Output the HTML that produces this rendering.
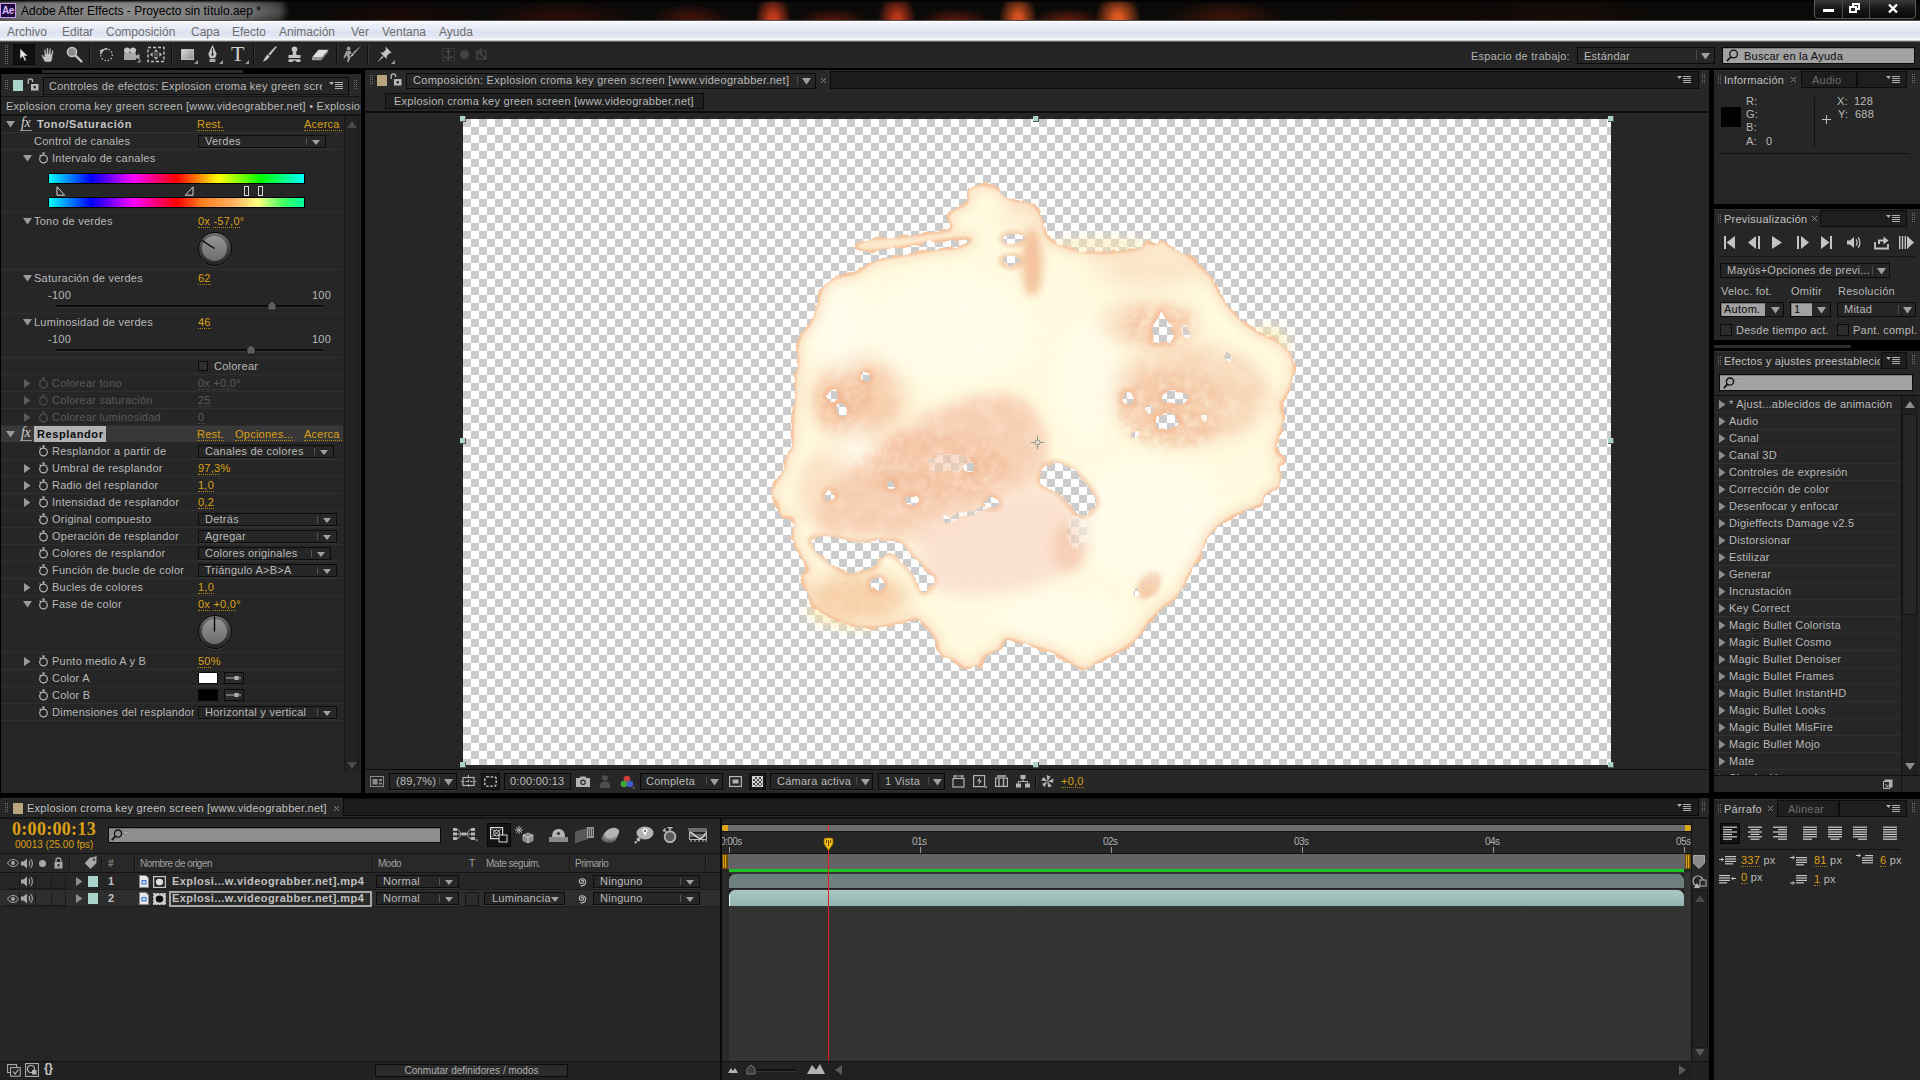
<!DOCTYPE html>
<html><head><meta charset="utf-8"><title>Adobe After Effects</title>
<style>
*{box-sizing:border-box;margin:0;padding:0}
html,body{width:1920px;height:1080px;overflow:hidden;background:#000}
body{font-family:"Liberation Sans",sans-serif;font-size:11px;color:#b9b9b9;letter-spacing:.25px;position:relative;line-height:13px}
.a{position:absolute}
.t{position:absolute;white-space:nowrap;height:13px;line-height:13px}
.o{color:#dca016}
.u{border-bottom:1px dotted #a87a10}
.dim{color:#5a5a5a}
.pn{position:absolute;background:#262626}
.dd{position:absolute;height:13px;background:#262626;border:1px solid #0c0c0c;box-shadow:0 1px 0 rgba(255,255,255,.06)}
.dd i{position:absolute;right:5px;top:4px;width:0;height:0;border-left:4px solid transparent;border-right:4px solid transparent;border-top:5px solid #a0a0a0}
.dd b{position:absolute;right:18px;top:2px;width:1px;height:7px;background:#555}
.dd span{position:absolute;left:6px;top:-1px;white-space:nowrap;line-height:13px;font-weight:normal}
.rs{position:absolute;left:0;height:1px;background:#303030}
svg{position:absolute;overflow:visible}
</style></head>
<body>
<div class="a" style="left:0;top:0;width:1920px;height:21px;background:#0b0a09;overflow:hidden">
<div class="a" style="left:754px;top:-7px;width:38px;height:44px;border-radius:50%;background:radial-gradient(ellipse at 50% 60%,#c43a1c 0%,#c43a1c 12%,transparent 68%);opacity:1"></div>
<div class="a" style="left:877px;top:-7px;width:40px;height:44px;border-radius:50%;background:radial-gradient(ellipse at 50% 60%,#b8341a 0%,#b8341a 12%,transparent 68%);opacity:1"></div>
<div class="a" style="left:998px;top:-8px;width:40px;height:44px;border-radius:50%;background:radial-gradient(ellipse at 50% 60%,#d0501f 0%,#d0501f 12%,transparent 68%);opacity:1"></div>
<div class="a" style="left:1094px;top:-8px;width:48px;height:44px;border-radius:50%;background:radial-gradient(ellipse at 50% 60%,#d8581f 0%,#d8581f 12%,transparent 68%);opacity:1"></div>
<div class="a" style="left:650px;top:4px;width:80px;height:24px;border-radius:50%;background:radial-gradient(ellipse at 50% 60%,#4a130a 0%,#4a130a 12%,transparent 68%);opacity:0.8"></div>
<div class="a" style="left:797px;top:8px;width:72px;height:20px;border-radius:50%;background:radial-gradient(ellipse at 50% 60%,#5a170c 0%,#5a170c 12%,transparent 68%);opacity:0.8"></div>
<div class="a" style="left:919px;top:8px;width:72px;height:20px;border-radius:50%;background:radial-gradient(ellipse at 50% 60%,#60190d 0%,#60190d 12%,transparent 68%);opacity:0.8"></div>
<div class="a" style="left:1031px;top:8px;width:72px;height:20px;border-radius:50%;background:radial-gradient(ellipse at 50% 60%,#6a1e0e 0%,#6a1e0e 12%,transparent 68%);opacity:0.8"></div>
<div class="a" style="left:480px;top:2px;width:160px;height:24px;border-radius:50%;background:radial-gradient(ellipse at 50% 60%,#2a0c07 0%,#2a0c07 12%,transparent 68%);opacity:0.9"></div>
<div class="a" style="left:1165px;top:0px;width:120px;height:28px;border-radius:50%;background:radial-gradient(ellipse at 50% 60%,#3a1408 0%,#3a1408 12%,transparent 68%);opacity:0.9"></div>
<div class="a" style="left:1450px;top:-4px;width:220px;height:32px;border-radius:50%;background:radial-gradient(ellipse at 50% 60%,#1c0b05 0%,#1c0b05 12%,transparent 68%);opacity:0.6"></div>
<div class="a" style="left:1310px;top:-4px;width:220px;height:28px;border-radius:50%;background:radial-gradient(ellipse at 50% 60%,#120804 0%,#120804 12%,transparent 68%);opacity:0.6"></div>
<div class="a" style="left:310px;top:2px;width:180px;height:24px;border-radius:50%;background:radial-gradient(ellipse at 50% 60%,#1c0805 0%,#1c0805 12%,transparent 68%);opacity:0.8"></div>
<div class="a" style="left:-30px;top:-7px;width:315px;height:36px;border-radius:19px;background:radial-gradient(ellipse at center,rgba(170,170,170,.85) 0%,rgba(150,150,150,.75) 55%,rgba(105,105,105,.35) 80%,rgba(0,0,0,0) 100%);filter:blur(3px)"></div>
<div class="a" style="left:0;top:0;width:1920px;height:3px;background:linear-gradient(#000,rgba(0,0,0,0))"></div>
<div class="a" style="left:0;top:3px;width:16px;height:15px;background:#1f0a3c;border:1px solid #c89cf0;color:#d9b8ff;font-size:10px;font-weight:bold;line-height:13px;letter-spacing:-.3px;text-align:center">Ae</div>
<div class="t" style="left:21px;top:4px;font-size:12px;letter-spacing:0;color:#000;height:15px;line-height:15px">Adobe After Effects - Proyecto sin título.aep *</div>
<div class="a" style="left:1814px;top:-1px;width:102px;height:20px;border:1px solid #5a5a5a;border-radius:0 0 4px 4px;background:linear-gradient(#3a3a3a,#151515 50%,#0a0a0a)"></div>
<div class="a" style="left:1842px;top:0;width:1px;height:18px;background:#4a4a4a"></div><div class="a" style="left:1869px;top:0;width:1px;height:18px;background:#4a4a4a"></div>
<div class="a" style="left:1823px;top:9px;width:11px;height:3px;background:#fff"></div>
<div class="a" style="left:1852px;top:3px;width:8px;height:7px;border:2px solid #fff;border-top-width:2px"></div><div class="a" style="left:1849px;top:6px;width:8px;height:7px;border:2px solid #fff;background:#222"></div>
<svg style="left:1888px;top:4px" width="10" height="9"><path d="M1 0.5L9 8.5M9 0.5L1 8.5" stroke="#fff" stroke-width="2.4"/></svg>
</div>
<div class="a" style="left:0;top:21px;width:1920px;height:21px;background:linear-gradient(#ffffff 0,#ffffff 1px,#f0f3fb 2px,#e6eaf6 8px,#dde2f0 11px,#e4e8f4 16px,#fbfcfe 19px,#8a8d95 20px,#3a3a3a 21px)"></div>
<div class="a" style="left:0;top:20px;width:1920px;height:1px;background:#55504c"></div>
<div class="t" style="left:7px;top:25px;font-size:12px;letter-spacing:0;color:#6d6d6d;height:15px;line-height:15px">Archivo</div>
<div class="t" style="left:62px;top:25px;font-size:12px;letter-spacing:0;color:#6d6d6d;height:15px;line-height:15px">Editar</div>
<div class="t" style="left:106px;top:25px;font-size:12px;letter-spacing:0;color:#6d6d6d;height:15px;line-height:15px">Composición</div>
<div class="t" style="left:191px;top:25px;font-size:12px;letter-spacing:0;color:#6d6d6d;height:15px;line-height:15px">Capa</div>
<div class="t" style="left:232px;top:25px;font-size:12px;letter-spacing:0;color:#6d6d6d;height:15px;line-height:15px">Efecto</div>
<div class="t" style="left:279px;top:25px;font-size:12px;letter-spacing:0;color:#6d6d6d;height:15px;line-height:15px">Animación</div>
<div class="t" style="left:351px;top:25px;font-size:12px;letter-spacing:0;color:#6d6d6d;height:15px;line-height:15px">Ver</div>
<div class="t" style="left:382px;top:25px;font-size:12px;letter-spacing:0;color:#6d6d6d;height:15px;line-height:15px">Ventana</div>
<div class="t" style="left:439px;top:25px;font-size:12px;letter-spacing:0;color:#6d6d6d;height:15px;line-height:15px">Ayuda</div>
<div class="a" style="left:0;top:42px;width:1920px;height:26px;background:#242424"></div>
<div class="a" style="left:5px;top:45px;width:1px;height:20px;background:repeating-linear-gradient(#707070 0 1px,transparent 1px 2px)"></div><div class="a" style="left:7px;top:45px;width:1px;height:20px;background:repeating-linear-gradient(#707070 0 1px,transparent 1px 2px)"></div>
<div class="a" style="left:13px;top:44px;width:22px;height:21px;background:#101010;border:1px solid #060606"></div>
<svg style="left:19px;top:48px" width="10" height="14"><path d="M1 0.5L1 11L3.6 8.6L5.6 13L7.4 12.2L5.4 8L9 8Z" fill="#e8e8e8" stroke="#222" stroke-width=".6"/></svg>
<svg style="left:41px;top:47px" width="15" height="16" viewBox="0 0 15 16"><path d="M4 15C2.5 12.5 1 10.5 0.5 8.5C0.6 7.6 1.6 7.6 2.2 8.4L3.4 10L3.2 3C3.3 2 4.6 2 4.8 3L5.3 7.2L5.6 1.4C5.8 .5 7 .5 7.2 1.4L7.5 7L8.4 1.9C8.7 1 9.9 1.2 9.9 2.2L9.7 7.4L11.2 3.6C11.6 2.8 12.7 3.2 12.5 4.2L11.4 9.5C11.3 12 10.8 13.6 10 15Z" fill="#c4c4c4" stroke="#333" stroke-width=".5"/></svg>
<svg style="left:66px;top:46px" width="17" height="17" viewBox="0 0 17 17"><circle cx="6" cy="6" r="4.6" fill="#8a8a8a" stroke="#c4c4c4" stroke-width="1.5"/><path d="M9.6 9.6L15.5 15.5" stroke="#c4c4c4" stroke-width="2.4" stroke-linecap="round"/></svg>
<div class="a" style="left:89px;top:45px;width:1px;height:20px;background:#0e0e0e;box-shadow:1px 0 0 #343434"></div>
<div class="a" style="left:171px;top:45px;width:1px;height:20px;background:#0e0e0e;box-shadow:1px 0 0 #343434"></div>
<div class="a" style="left:253px;top:45px;width:1px;height:20px;background:#0e0e0e;box-shadow:1px 0 0 #343434"></div>
<div class="a" style="left:336px;top:45px;width:1px;height:20px;background:#0e0e0e;box-shadow:1px 0 0 #343434"></div>
<div class="a" style="left:367px;top:45px;width:1px;height:20px;background:#0e0e0e;box-shadow:1px 0 0 #343434"></div>
<svg style="left:99px;top:47px" width="15" height="15" viewBox="0 0 15 15"><circle cx="7.5" cy="7.8" r="5.8" fill="none" stroke="#c4c4c4" stroke-width="1.3" stroke-dasharray="1.3 1.9"/><path d="M1.7 7.5A5.8 5.8 0 0 1 8.5 2" fill="none" stroke="#c4c4c4" stroke-width="1.3"/><path d="M.4 3.2L4.2 2.2L3.2 6Z" fill="#c4c4c4"/></svg>
<svg style="left:123px;top:47px" width="18" height="16" viewBox="0 0 18 16"><circle cx="4" cy="3.6" r="3" fill="#c4c4c4"/><circle cx="10" cy="3.6" r="3" fill="#c4c4c4"/><rect x="1" y="6" width="12" height="7" rx="1" fill="#a8a8a8"/><path d="M13 8.5L16.5 7V12.5L13 11Z" fill="#a8a8a8"/><path d="M14 15.5L17.5 15.5L17.5 12Z" fill="#999"/></svg>
<svg style="left:147px;top:46px" width="18" height="17" viewBox="0 0 18 17"><rect x="1" y="1.5" width="16" height="14" fill="none" stroke="#c4c4c4" stroke-width="1.4" stroke-dasharray="3 2"/><path d="M9 3.2L11.2 5.8H6.8ZM9 13.8L11.2 11.2H6.8ZM3 8.5L5.6 6.3V10.7ZM15 8.5L12.4 6.3V10.7Z" fill="#c4c4c4"/><rect x="6.6" y="6.3" width="4.8" height="4.4" fill="#555"/></svg>
<div class="a" style="left:181px;top:49px;width:13px;height:11px;background:linear-gradient(135deg,#d8d8d8,#909090);border:1px solid #bdbdbd"></div>
<svg style="left:194px;top:60px" width="4" height="4"><path d="M0 4H4V0Z" fill="#999"/></svg>
<svg style="left:206px;top:45px" width="13" height="18" viewBox="0 0 13 18"><path d="M6.5 0L10.5 8.5C10.5 10.5 9.6 12 8.8 13H4.2C3.4 12 2.5 10.5 2.5 8.5Z" fill="#c4c4c4"/><path d="M6.5 3V9" stroke="#333" stroke-width="1"/><circle cx="6.5" cy="9.6" r="1.2" fill="#333"/><rect x="3.6" y="13.8" width="5.8" height="3.2" fill="#aaa"/></svg>
<svg style="left:219px;top:60px" width="4" height="4"><path d="M0 4H4V0Z" fill="#999"/></svg>
<div class="t" style="left:231px;top:43px;font-family:'Liberation Serif',serif;font-size:22px;color:#cfcfcf;height:22px;line-height:22px;letter-spacing:0">T</div>
<svg style="left:245px;top:60px" width="4" height="4"><path d="M0 4H4V0Z" fill="#999"/></svg>
<svg style="left:262px;top:46px" width="16" height="17" viewBox="0 0 16 17"><path d="M15 .8L8 9.5L6.2 8L13.6 .2Z" fill="#c4c4c4"/><path d="M5.6 8.6L7.6 10.4C6.8 12.6 4 14.5 .8 15.8C2.4 13.4 3.2 10.4 5.6 8.6Z" fill="#c4c4c4"/></svg>
<svg style="left:287px;top:46px" width="15" height="17" viewBox="0 0 15 17"><circle cx="7.5" cy="3.4" r="2.8" fill="#c4c4c4"/><path d="M6.2 5.5H8.8L9.6 9H13.5V12H1.5V9H5.4Z" fill="#c4c4c4"/><path d="M1.5 13.2H13.5V16H10L7.5 14.2L5 16H1.5Z" fill="#c4c4c4"/></svg>
<svg style="left:311px;top:49px" width="18" height="12" viewBox="0 0 18 12"><path d="M7.5 .8H17.5L11 8.5H1Z" fill="#e0e0e0"/><path d="M1 8.5H11L10.5 11.2H.8Z" fill="#9a9a9a"/><path d="M11 8.5L17.5 .8L17 3.6L10.5 11.2Z" fill="#7c7c7c"/></svg>
<svg style="left:343px;top:45px" width="19" height="18" viewBox="0 0 19 18"><circle cx="5.6" cy="3.4" r="1.9" fill="#9c9c9c"/><path d="M3.2 6L7 5.6L8.8 8.6L6.6 9.4L7.4 13L5.6 17H3.8L5 13L3.4 10.4L1.6 13.4L.4 12.6Z" fill="#9c9c9c"/><path d="M18.2 .6L11.4 8.6L10.2 7.6Z" fill="#c4c4c4"/><path d="M9.8 8L11 9C10 11 8.8 11.6 7 12C8.2 10.6 8.4 9.2 9.8 8Z" fill="#c4c4c4"/></svg>
<svg style="left:376px;top:46px" width="17" height="17" viewBox="0 0 17 17"><path d="M9.5 .6L15.6 6.8L13.6 7.2L10.8 10L10.6 13L4.2 6.6L7.2 6.4L9.9 3.6Z" fill="#c4c4c4"/><path d="M6.4 9.8L7.6 11L1 16.4Z" fill="#c4c4c4"/></svg>
<svg style="left:391px;top:60px" width="4" height="4"><path d="M0 4H4V0Z" fill="#999"/></svg>
<svg style="left:442px;top:48px" width="13" height="13" viewBox="0 0 13 13"><rect x=".5" y=".5" width="12" height="12" fill="none" stroke="#383838"/><path d="M6.5 2V11M2 8L6.5 11L11 8M4.5 4L6.5 2L8.5 4" fill="none" stroke="#4a4a4a" stroke-width="1.2"/></svg>
<div class="a" style="left:460px;top:50px;width:9px;height:9px;border-radius:50%;background:#444"></div>
<svg style="left:475px;top:48px" width="13" height="13" viewBox="0 0 13 13"><path d="M2 3H11V11H2ZM2 3L11 11M6 .5V6" fill="none" stroke="#4a4a4a" stroke-width="1.2"/></svg>
<div class="t " style="left:1471px;top:50px;color:#b4b4b4">Espacio de trabajo:</div>
<div class="a" style="left:1577px;top:47px;width:138px;height:17px;background:#262626;border:1px solid #0a0a0a"></div>
<div class="t " style="left:1584px;top:50px;">Estándar</div>
<div class="a" style="left:1696px;top:50px;width:1px;height:10px;background:#4c4c4c"></div>
<svg style="left:1701px;top:53px" width="9" height="7"><path d="M0 0L9 0L4.5 6.5Z" fill="#a0a0a0"/></svg>
<div class="a" style="left:1722px;top:47px;width:193px;height:17px;background:#a2a2a2;border:1px solid #0a0a0a;box-shadow:inset 0 1px 0 #7f7f7f"></div>
<svg style="left:1726px;top:49px" width="13" height="13" viewBox="0 0 13 13"><circle cx="7.6" cy="5" r="3.8" fill="none" stroke="#111" stroke-width="1.3"/><path d="M5 7.8L1 12" stroke="#111" stroke-width="1.8"/></svg>
<div class="t " style="left:1744px;top:50px;color:#0c0c0c">Buscar en la Ayuda</div>
<div class="a" style="left:42px;top:70px;width:201px;height:3px;background:#2b2b2b;"></div>
<div class="a" style="left:1px;top:74px;width:360px;height:719px;background:#262626;overflow:hidden">
<div class="a" style="left:0px;top:0px;width:360px;height:22px;background:#282828;"></div>
<div class="a" style="left:4px;top:6px;width:1px;height:10px;background:repeating-linear-gradient(#707070 0 1px,transparent 1px 2px)"></div><div class="a" style="left:6px;top:6px;width:1px;height:10px;background:repeating-linear-gradient(#707070 0 1px,transparent 1px 2px)"></div>
<div class="a" style="left:12px;top:6px;width:10px;height:11px;background:#a9d4cc;"></div>
<svg style="left:26px;top:4px" width="12" height="13" viewBox="0 0 12 13"><path d="M1.2 6V3.2C1.2 1.6 2.2 .8 3.4 .8C4.6 .8 5.6 1.6 5.6 3.2V4" fill="none" stroke="#b8b8b8" stroke-width="1.3"/><rect x="4" y="6" width="7.5" height="6.5" fill="#b8b8b8"/><rect x="6.6" y="8" width="2.2" height="2.4" fill="#222"/></svg>
<div class="a" style="left:42px;top:3px;width:306px;height:18px;background:#262626;border:1px solid #0a0a0a;border-bottom-color:#111"></div>
<div class="a" style="left:48px;top:6px;width:273px;height:14px;overflow:hidden"><div class="t" style="left:0;top:0">Controles de efectos: Explosion croma key green screen</div></div>
<svg style="left:328px;top:7px" width="14" height="9"><path d="M0 1h5L2.5 4Z" fill="#b0b0b0"/><path d="M6 1.5h8M6 3.5h8M6 5.5h8M6 7.5h8" stroke="#b0b0b0" stroke-width="1"/></svg>
<div class="a" style="left:353px;top:6px;width:1px;height:10px;background:repeating-linear-gradient(#707070 0 1px,transparent 1px 2px)"></div><div class="a" style="left:355px;top:6px;width:1px;height:10px;background:repeating-linear-gradient(#707070 0 1px,transparent 1px 2px)"></div>
<div class="a" style="left:0;top:22px;width:360px;height:1px;background:#161616"></div>
<div class="t " style="left:5px;top:26px;">Explosion croma key green screen [www.videograbber.net] • Explosion croma</div>
<div class="a" style="left:0px;top:40px;width:360px;height:2px;background:#151515;"></div>
<div class="a" style="left:343px;top:42px;width:15px;height:655px;background:#222;border-left:1px solid #161616;border-right:1px solid #161616"></div>
<svg style="left:346px;top:47px" width="10" height="7"><path d="M0 7H10L5 0Z" fill="#4a4a4a"/></svg>
<svg style="left:346px;top:688px" width="10" height="7"><path d="M0 0H10L5 7Z" fill="#4a4a4a"/></svg>
<div class="a" style="left:0;top:42px;width:342px;height:660px;overflow:hidden">
<div class="a" style="left:0px;top:0px;width:342px;height:16px;background:#232323;"></div>
<svg style="left:5px;top:5px" width="9" height="7"><path d="M0 0L9 0L4.5 6.5Z" fill="#9a9a9a"/></svg>
<div class="t" style="left:20px;top:-1px;font-family:'Liberation Serif',serif;font-style:italic;font-size:14px;color:#d0d0d0;letter-spacing:-.5px;height:16px;line-height:16px">fx</div><div class="a" style="left:19px;top:14px;width:12px;height:1px;background:#999"></div>
<div class="t " style="left:36px;top:2px;font-weight:bold;color:#c6c6c6;letter-spacing:.6px">Tono/Saturación</div>
<div class="t o" style="left:196px;top:2px"><span style="border-bottom:1px dotted #b8860f;padding-bottom:0">Rest.</span></div>
<div class="t o" style="left:303px;top:2px"><span style="border-bottom:1px dotted #b8860f;padding-bottom:0">Acerca&nbsp;de...</span></div>
<div class="rs" style="top:16px;width:342px"></div>
<div class="t " style="left:33px;top:19px;">Control de canales</div>
<div class="dd" style="left:197px;top:19px;width:128px;"><span>Verdes</span><b></b><i></i></div>
<div class="rs" style="top:33px;width:342px"></div>
<svg style="left:22px;top:39px" width="9" height="7"><path d="M0 0L9 0L4.5 6.5Z" fill="#9a9a9a"/></svg>
<svg style="left:37px;top:36px" width="11" height="12" viewBox="0 0 11 12"><circle cx="5.5" cy="7" r="3.8" fill="none" stroke="#b4b4b4" stroke-width="1.25"/><path d="M4 1h3M5.5 1v2M1.6 2.6l1.3 1.3" stroke="#b4b4b4" stroke-width="1.1" fill="none"/></svg>
<div class="t " style="left:51px;top:36px;">Intervalo de canales</div>
<div class="a" style="left:47px;top:57px;width:257px;height:11px;border:1px solid #000;background:linear-gradient(90deg,#00ffff 0%,#0000ff 16.6%,#ff00ff 33.3%,#ff0000 50%,#ffff00 66.6%,#00ff00 83.3%,#00ffff 100%)"></div>
<div class="a" style="left:47px;top:81px;width:257px;height:11px;border:1px solid #000;background:linear-gradient(90deg,#00ffff 0%,#0000ff 16.6%,#ff00ff 33.3%,#ff0000 50%,#ff8020 60%,#ffb060 72%,#ffff80 82%,#40ff60 92%,#00ffa0 100%)"></div>
<svg style="left:55px;top:70px" width="10" height="10"><path d="M1 .8L1 9.2L8.6 9.2Z" fill="none" stroke="#d8d8d8" stroke-width="1"/></svg>
<svg style="left:183px;top:70px" width="10" height="10"><path d="M9 .8L9 9.2L1.4 9.2Z" fill="none" stroke="#d8d8d8" stroke-width="1"/></svg>
<div class="a" style="left:243px;top:70px;width:5px;height:10px;border:1px solid #d8d8d8"></div>
<div class="a" style="left:257px;top:70px;width:5px;height:10px;border:1px solid #d8d8d8"></div>
<div class="rs" style="top:96px;width:342px"></div>
<svg style="left:22px;top:102px" width="9" height="7"><path d="M0 0L9 0L4.5 6.5Z" fill="#9a9a9a"/></svg>
<div class="t " style="left:33px;top:99px;">Tono de verdes</div>
<div class="t o" style="left:197px;top:99px"><span style="border-bottom:1px dotted #b8860f;padding-bottom:0">0x</span> <span style="border-bottom:1px dotted #b8860f;padding-bottom:0">-57,0</span>°</div>
<div class="a" style="left:196.5px;top:115.5px;width:34px;height:34px;border-radius:50%;background:linear-gradient(#707070,#3c3c3c 55%,#242424);border:1px solid #0a0a0a;box-shadow:0 1px 0 rgba(255,255,255,.10)"></div><div class="a" style="left:201.0px;top:119.5px;width:25px;height:25px;border-radius:50%;background:linear-gradient(#959595,#6c6c6c)"></div><svg style="left:0;top:0" width="342" height="660"><path d="M213.5 132.5L200.9 124.3" stroke="#0a0a0a" stroke-width="1.4"/></svg>
<div class="rs" style="top:153px;width:342px"></div>
<svg style="left:22px;top:159px" width="9" height="7"><path d="M0 0L9 0L4.5 6.5Z" fill="#9a9a9a"/></svg>
<div class="t " style="left:33px;top:156px;">Saturación de verdes</div>
<div class="t o" style="left:197px;top:156px"><span style="border-bottom:1px dotted #b8860f;padding-bottom:0">62</span></div>
<div class="t " style="left:47px;top:173px;">-100</div>
<div class="t " style="left:311px;top:173px;">100</div>
<div class="a" style="left:55px;top:189px;width:267px;height:2px;background:#0c0c0c;box-shadow:0 1px 0 #333"></div>
<svg style="left:267px;top:185px" width="8" height="9"><path d="M0 9V3.5L4 0L8 3.5V9Z" fill="#5e5e5e" stroke="#161616" stroke-width=".8"/></svg>
<div class="rs" style="top:197px;width:342px"></div>
<svg style="left:22px;top:203px" width="9" height="7"><path d="M0 0L9 0L4.5 6.5Z" fill="#9a9a9a"/></svg>
<div class="t " style="left:33px;top:200px;">Luminosidad de verdes</div>
<div class="t o" style="left:197px;top:200px"><span style="border-bottom:1px dotted #b8860f;padding-bottom:0">46</span></div>
<div class="t " style="left:47px;top:217px;">-100</div>
<div class="t " style="left:311px;top:217px;">100</div>
<div class="a" style="left:55px;top:233px;width:267px;height:2px;background:#0c0c0c;box-shadow:0 1px 0 #333"></div>
<svg style="left:246px;top:229px" width="8" height="9"><path d="M0 9V3.5L4 0L8 3.5V9Z" fill="#5e5e5e" stroke="#161616" stroke-width=".8"/></svg>
<div class="rs" style="top:241px;width:342px"></div>
<div class="a" style="left:197px;top:245px;width:10px;height:10px;background:#2e2e2e;border:1px solid #0a0a0a"></div>
<div class="t " style="left:213px;top:244px;">Colorear</div>
<div class="rs" style="top:258px;width:342px"></div>
<svg style="left:23px;top:263px" width="7" height="9"><path d="M0 0L6.5 4.5L0 9Z" fill="#5a5a5a"/></svg>
<svg style="left:37px;top:261px" width="11" height="12" viewBox="0 0 11 12"><circle cx="5.5" cy="7" r="3.8" fill="none" stroke="#4e4e4e" stroke-width="1.25"/><path d="M4 1h3M5.5 1v2M1.6 2.6l1.3 1.3" stroke="#4e4e4e" stroke-width="1.1" fill="none"/></svg>
<div class="t dim" style="left:51px;top:261px;">Colorear tono</div>
<div class="t dim" style="left:197px;top:261px"><span style="border-bottom:1px dotted #4a4a4a;padding-bottom:0">0x</span> <span style="border-bottom:1px dotted #4a4a4a;padding-bottom:0">+0,0</span>°</div>
<div class="rs" style="top:275px;width:342px"></div>
<svg style="left:23px;top:280px" width="7" height="9"><path d="M0 0L6.5 4.5L0 9Z" fill="#5a5a5a"/></svg>
<svg style="left:37px;top:278px" width="11" height="12" viewBox="0 0 11 12"><circle cx="5.5" cy="7" r="3.8" fill="none" stroke="#4e4e4e" stroke-width="1.25"/><path d="M4 1h3M5.5 1v2M1.6 2.6l1.3 1.3" stroke="#4e4e4e" stroke-width="1.1" fill="none"/></svg>
<div class="t dim" style="left:51px;top:278px;">Colorear saturación</div>
<div class="t dim" style="left:197px;top:278px"><span style="border-bottom:1px dotted #4a4a4a;padding-bottom:0">25</span></div>
<div class="rs" style="top:292px;width:342px"></div>
<svg style="left:23px;top:297px" width="7" height="9"><path d="M0 0L6.5 4.5L0 9Z" fill="#5a5a5a"/></svg>
<svg style="left:37px;top:295px" width="11" height="12" viewBox="0 0 11 12"><circle cx="5.5" cy="7" r="3.8" fill="none" stroke="#4e4e4e" stroke-width="1.25"/><path d="M4 1h3M5.5 1v2M1.6 2.6l1.3 1.3" stroke="#4e4e4e" stroke-width="1.1" fill="none"/></svg>
<div class="t dim" style="left:51px;top:295px;">Colorear luminosidad</div>
<div class="t dim" style="left:197px;top:295px"><span style="border-bottom:1px dotted #4a4a4a;padding-bottom:0">0</span></div>
<div class="rs" style="top:309px;width:342px"></div>
<div class="a" style="left:0px;top:310px;width:342px;height:16px;background:#383838;"></div>
<svg style="left:5px;top:315px" width="9" height="7"><path d="M0 0L9 0L4.5 6.5Z" fill="#9a9a9a"/></svg>
<div class="t" style="left:20px;top:309px;font-family:'Liberation Serif',serif;font-style:italic;font-size:14px;color:#d0d0d0;letter-spacing:-.5px;height:16px;line-height:16px">fx</div><div class="a" style="left:19px;top:324px;width:12px;height:1px;background:#999"></div>
<div class="a" style="left:33px;top:310px;width:72px;height:16px;background:#b2b2b2;"></div>
<div class="t " style="left:36px;top:312px;font-weight:bold;color:#0a0a0a;letter-spacing:.6px">Resplandor</div>
<div class="t o" style="left:196px;top:312px"><span style="border-bottom:1px dotted #b8860f;padding-bottom:0">Rest.</span></div>
<div class="t o" style="left:234px;top:312px"><span style="border-bottom:1px dotted #b8860f;padding-bottom:0">Opciones...</span></div>
<div class="t o" style="left:303px;top:312px"><span style="border-bottom:1px dotted #b8860f;padding-bottom:0">Acerca&nbsp;de...</span></div>
<div class="a" style="left:25px;top:335px;width:1px;height:1px;background:#3c3c3c;"></div>
<svg style="left:37px;top:329px" width="11" height="12" viewBox="0 0 11 12"><circle cx="5.5" cy="7" r="3.8" fill="none" stroke="#b4b4b4" stroke-width="1.25"/><path d="M4 1h3M5.5 1v2M1.6 2.6l1.3 1.3" stroke="#b4b4b4" stroke-width="1.1" fill="none"/></svg>
<div class="a" style="left:51px;top:329px;width:142px;height:14px;overflow:hidden"><div class="t" style="left:0;top:0">Resplandor a partir de</div></div>
<div class="dd" style="left:197px;top:329px;width:136px;"><span>Canales de colores</span><b></b><i></i></div>
<div class="rs" style="top:343px;width:342px"></div>
<svg style="left:23px;top:348px" width="7" height="9"><path d="M0 0L6.5 4.5L0 9Z" fill="#9a9a9a"/></svg>
<svg style="left:37px;top:346px" width="11" height="12" viewBox="0 0 11 12"><circle cx="5.5" cy="7" r="3.8" fill="none" stroke="#b4b4b4" stroke-width="1.25"/><path d="M4 1h3M5.5 1v2M1.6 2.6l1.3 1.3" stroke="#b4b4b4" stroke-width="1.1" fill="none"/></svg>
<div class="a" style="left:51px;top:346px;width:142px;height:14px;overflow:hidden"><div class="t" style="left:0;top:0">Umbral de resplandor</div></div>
<div class="t o" style="left:197px;top:346px"><span style="border-bottom:1px dotted #b8860f;padding-bottom:0">97,3</span>%</div>
<div class="rs" style="top:360px;width:342px"></div>
<svg style="left:23px;top:365px" width="7" height="9"><path d="M0 0L6.5 4.5L0 9Z" fill="#9a9a9a"/></svg>
<svg style="left:37px;top:363px" width="11" height="12" viewBox="0 0 11 12"><circle cx="5.5" cy="7" r="3.8" fill="none" stroke="#b4b4b4" stroke-width="1.25"/><path d="M4 1h3M5.5 1v2M1.6 2.6l1.3 1.3" stroke="#b4b4b4" stroke-width="1.1" fill="none"/></svg>
<div class="a" style="left:51px;top:363px;width:142px;height:14px;overflow:hidden"><div class="t" style="left:0;top:0">Radio del resplandor</div></div>
<div class="t o" style="left:197px;top:363px"><span style="border-bottom:1px dotted #b8860f;padding-bottom:0">1,0</span></div>
<div class="rs" style="top:377px;width:342px"></div>
<svg style="left:23px;top:382px" width="7" height="9"><path d="M0 0L6.5 4.5L0 9Z" fill="#9a9a9a"/></svg>
<svg style="left:37px;top:380px" width="11" height="12" viewBox="0 0 11 12"><circle cx="5.5" cy="7" r="3.8" fill="none" stroke="#b4b4b4" stroke-width="1.25"/><path d="M4 1h3M5.5 1v2M1.6 2.6l1.3 1.3" stroke="#b4b4b4" stroke-width="1.1" fill="none"/></svg>
<div class="a" style="left:51px;top:380px;width:142px;height:14px;overflow:hidden"><div class="t" style="left:0;top:0">Intensidad de resplandor</div></div>
<div class="t o" style="left:197px;top:380px"><span style="border-bottom:1px dotted #b8860f;padding-bottom:0">0,2</span></div>
<div class="rs" style="top:394px;width:342px"></div>
<div class="a" style="left:25px;top:403px;width:1px;height:1px;background:#3c3c3c;"></div>
<svg style="left:37px;top:397px" width="11" height="12" viewBox="0 0 11 12"><circle cx="5.5" cy="7" r="3.8" fill="none" stroke="#b4b4b4" stroke-width="1.25"/><path d="M4 1h3M5.5 1v2M1.6 2.6l1.3 1.3" stroke="#b4b4b4" stroke-width="1.1" fill="none"/></svg>
<div class="a" style="left:51px;top:397px;width:142px;height:14px;overflow:hidden"><div class="t" style="left:0;top:0">Original compuesto</div></div>
<div class="dd" style="left:197px;top:397px;width:139px;"><span>Detrás</span><b></b><i></i></div>
<div class="rs" style="top:411px;width:342px"></div>
<div class="a" style="left:25px;top:420px;width:1px;height:1px;background:#3c3c3c;"></div>
<svg style="left:37px;top:414px" width="11" height="12" viewBox="0 0 11 12"><circle cx="5.5" cy="7" r="3.8" fill="none" stroke="#b4b4b4" stroke-width="1.25"/><path d="M4 1h3M5.5 1v2M1.6 2.6l1.3 1.3" stroke="#b4b4b4" stroke-width="1.1" fill="none"/></svg>
<div class="a" style="left:51px;top:414px;width:142px;height:14px;overflow:hidden"><div class="t" style="left:0;top:0">Operación de resplandor</div></div>
<div class="dd" style="left:197px;top:414px;width:139px;"><span>Agregar</span><b></b><i></i></div>
<div class="rs" style="top:428px;width:342px"></div>
<div class="a" style="left:25px;top:437px;width:1px;height:1px;background:#3c3c3c;"></div>
<svg style="left:37px;top:431px" width="11" height="12" viewBox="0 0 11 12"><circle cx="5.5" cy="7" r="3.8" fill="none" stroke="#b4b4b4" stroke-width="1.25"/><path d="M4 1h3M5.5 1v2M1.6 2.6l1.3 1.3" stroke="#b4b4b4" stroke-width="1.1" fill="none"/></svg>
<div class="a" style="left:51px;top:431px;width:142px;height:14px;overflow:hidden"><div class="t" style="left:0;top:0">Colores de resplandor</div></div>
<div class="dd" style="left:197px;top:431px;width:133px;"><span>Colores originales</span><b></b><i></i></div>
<div class="rs" style="top:445px;width:342px"></div>
<div class="a" style="left:25px;top:454px;width:1px;height:1px;background:#3c3c3c;"></div>
<svg style="left:37px;top:448px" width="11" height="12" viewBox="0 0 11 12"><circle cx="5.5" cy="7" r="3.8" fill="none" stroke="#b4b4b4" stroke-width="1.25"/><path d="M4 1h3M5.5 1v2M1.6 2.6l1.3 1.3" stroke="#b4b4b4" stroke-width="1.1" fill="none"/></svg>
<div class="a" style="left:51px;top:448px;width:142px;height:14px;overflow:hidden"><div class="t" style="left:0;top:0">Función de bucle de color</div></div>
<div class="dd" style="left:197px;top:448px;width:139px;"><span>Triángulo A&gt;B&gt;A</span><b></b><i></i></div>
<div class="rs" style="top:462px;width:342px"></div>
<svg style="left:23px;top:467px" width="7" height="9"><path d="M0 0L6.5 4.5L0 9Z" fill="#9a9a9a"/></svg>
<svg style="left:37px;top:465px" width="11" height="12" viewBox="0 0 11 12"><circle cx="5.5" cy="7" r="3.8" fill="none" stroke="#b4b4b4" stroke-width="1.25"/><path d="M4 1h3M5.5 1v2M1.6 2.6l1.3 1.3" stroke="#b4b4b4" stroke-width="1.1" fill="none"/></svg>
<div class="a" style="left:51px;top:465px;width:142px;height:14px;overflow:hidden"><div class="t" style="left:0;top:0">Bucles de colores</div></div>
<div class="t o" style="left:197px;top:465px"><span style="border-bottom:1px dotted #b8860f;padding-bottom:0">1,0</span></div>
<div class="rs" style="top:479px;width:342px"></div>
<svg style="left:22px;top:485px" width="9" height="7"><path d="M0 0L9 0L4.5 6.5Z" fill="#9a9a9a"/></svg>
<svg style="left:37px;top:482px" width="11" height="12" viewBox="0 0 11 12"><circle cx="5.5" cy="7" r="3.8" fill="none" stroke="#b4b4b4" stroke-width="1.25"/><path d="M4 1h3M5.5 1v2M1.6 2.6l1.3 1.3" stroke="#b4b4b4" stroke-width="1.1" fill="none"/></svg>
<div class="a" style="left:51px;top:482px;width:142px;height:14px;overflow:hidden"><div class="t" style="left:0;top:0">Fase de color</div></div>
<div class="t o" style="left:197px;top:482px"><span style="border-bottom:1px dotted #b8860f;padding-bottom:0">0x</span> <span style="border-bottom:1px dotted #b8860f;padding-bottom:0">+0,0</span>°</div>
<svg style="left:23px;top:541px" width="7" height="9"><path d="M0 0L6.5 4.5L0 9Z" fill="#9a9a9a"/></svg>
<svg style="left:37px;top:539px" width="11" height="12" viewBox="0 0 11 12"><circle cx="5.5" cy="7" r="3.8" fill="none" stroke="#b4b4b4" stroke-width="1.25"/><path d="M4 1h3M5.5 1v2M1.6 2.6l1.3 1.3" stroke="#b4b4b4" stroke-width="1.1" fill="none"/></svg>
<div class="a" style="left:51px;top:539px;width:142px;height:14px;overflow:hidden"><div class="t" style="left:0;top:0">Punto medio A y B</div></div>
<div class="t o" style="left:197px;top:539px"><span style="border-bottom:1px dotted #b8860f;padding-bottom:0">50</span>%</div>
<div class="rs" style="top:553px;width:342px"></div>
<div class="a" style="left:25px;top:562px;width:1px;height:1px;background:#3c3c3c;"></div>
<svg style="left:37px;top:556px" width="11" height="12" viewBox="0 0 11 12"><circle cx="5.5" cy="7" r="3.8" fill="none" stroke="#b4b4b4" stroke-width="1.25"/><path d="M4 1h3M5.5 1v2M1.6 2.6l1.3 1.3" stroke="#b4b4b4" stroke-width="1.1" fill="none"/></svg>
<div class="a" style="left:51px;top:556px;width:142px;height:14px;overflow:hidden"><div class="t" style="left:0;top:0">Color A</div></div>
<div class="a" style="left:197px;top:556px;width:20px;height:12px;background:#fff;border:1px solid #0a0a0a"></div>
<div class="a" style="left:223px;top:556px;width:20px;height:12px;background:#2a2a2a;border:1px solid #0a0a0a"></div>
<svg style="left:225px;top:559px" width="16" height="6"><path d="M0 3H15M9 1.5H12V4.5H9Z" stroke="#b0b0b0" stroke-width="1.2" fill="#b0b0b0"/></svg>
<div class="rs" style="top:570px;width:342px"></div>
<div class="a" style="left:25px;top:579px;width:1px;height:1px;background:#3c3c3c;"></div>
<svg style="left:37px;top:573px" width="11" height="12" viewBox="0 0 11 12"><circle cx="5.5" cy="7" r="3.8" fill="none" stroke="#b4b4b4" stroke-width="1.25"/><path d="M4 1h3M5.5 1v2M1.6 2.6l1.3 1.3" stroke="#b4b4b4" stroke-width="1.1" fill="none"/></svg>
<div class="a" style="left:51px;top:573px;width:142px;height:14px;overflow:hidden"><div class="t" style="left:0;top:0">Color B</div></div>
<div class="a" style="left:197px;top:573px;width:20px;height:12px;background:#000;border:1px solid #0a0a0a"></div>
<div class="a" style="left:223px;top:573px;width:20px;height:12px;background:#2a2a2a;border:1px solid #0a0a0a"></div>
<svg style="left:225px;top:576px" width="16" height="6"><path d="M0 3H15M9 1.5H12V4.5H9Z" stroke="#b0b0b0" stroke-width="1.2" fill="#b0b0b0"/></svg>
<div class="rs" style="top:587px;width:342px"></div>
<div class="a" style="left:25px;top:596px;width:1px;height:1px;background:#3c3c3c;"></div>
<svg style="left:37px;top:590px" width="11" height="12" viewBox="0 0 11 12"><circle cx="5.5" cy="7" r="3.8" fill="none" stroke="#b4b4b4" stroke-width="1.25"/><path d="M4 1h3M5.5 1v2M1.6 2.6l1.3 1.3" stroke="#b4b4b4" stroke-width="1.1" fill="none"/></svg>
<div class="a" style="left:51px;top:590px;width:142px;height:14px;overflow:hidden"><div class="t" style="left:0;top:0">Dimensiones del resplandor</div></div>
<div class="dd" style="left:197px;top:590px;width:139px;"><span>Horizontal y vertical</span><b></b><i></i></div>
<div class="rs" style="top:604px;width:342px"></div>
<div class="a" style="left:196.5px;top:498.5px;width:34px;height:34px;border-radius:50%;background:linear-gradient(#707070,#3c3c3c 55%,#242424);border:1px solid #0a0a0a;box-shadow:0 1px 0 rgba(255,255,255,.10)"></div><div class="a" style="left:201.0px;top:502.5px;width:25px;height:25px;border-radius:50%;background:linear-gradient(#959595,#6c6c6c)"></div><svg style="left:0;top:0" width="342" height="660"><path d="M213.5 515.5L213.5 500.5" stroke="#0a0a0a" stroke-width="1.4"/></svg>
<div class="rs" style="top:536px;width:342px"></div>
</div>
</div>
<div class="a" style="left:365px;top:70px;width:1344px;height:723px;background:#262626;overflow:hidden">
<div class="a" style="left:0px;top:0px;width:1343px;height:22px;background:#282828;"></div>
<div class="a" style="left:5px;top:5px;width:1px;height:10px;background:repeating-linear-gradient(#707070 0 1px,transparent 1px 2px)"></div><div class="a" style="left:7px;top:5px;width:1px;height:10px;background:repeating-linear-gradient(#707070 0 1px,transparent 1px 2px)"></div>
<div class="a" style="left:12px;top:5px;width:10px;height:11px;background:#b8a47e;"></div>
<svg style="left:25px;top:3px" width="12" height="13" viewBox="0 0 12 13"><path d="M1.2 6V3.2C1.2 1.6 2.2 .8 3.4 .8C4.6 .8 5.6 1.6 5.6 3.2V4" fill="none" stroke="#b8b8b8" stroke-width="1.3"/><rect x="4" y="6" width="7.5" height="6.5" fill="#b8b8b8"/><rect x="6.6" y="8" width="2.2" height="2.4" fill="#222"/></svg>
<div class="a" style="left:465px;top:1px;width:869px;height:18px;background:#1c1c1c;border:1px solid #0a0a0a"></div>
<div class="a" style="left:41px;top:3px;width:410px;height:16px;background:#262626;border:1px solid #0a0a0a"></div>
<div class="t " style="left:48px;top:4px;letter-spacing:.3px">Composición: Explosion croma key green screen [www.videograbber.net]</div>
<div class="a" style="left:432px;top:6px;width:1px;height:9px;background:#4c4c4c;"></div>
<svg style="left:437px;top:8px" width="9" height="7"><path d="M0 0L9 0L4.5 6.5Z" fill="#a0a0a0"/></svg>
<svg style="left:455px;top:7px" width="7" height="7"><path d="M1 1L6 6M6 1L1 6" stroke="#858585" stroke-width="1"/></svg>
<svg style="left:1312px;top:5px" width="14" height="9"><path d="M0 1h5L2.5 4Z" fill="#b0b0b0"/><path d="M6 1.5h8M6 3.5h8M6 5.5h8M6 7.5h8" stroke="#b0b0b0" stroke-width="1"/></svg>
<div class="a" style="left:1337px;top:4px;width:1px;height:10px;background:repeating-linear-gradient(#707070 0 1px,transparent 1px 2px)"></div><div class="a" style="left:1339px;top:4px;width:1px;height:10px;background:repeating-linear-gradient(#707070 0 1px,transparent 1px 2px)"></div>
<div class="a" style="left:20px;top:23px;width:319px;height:16px;background:#1f1f1f;border:1px solid #0c0c0c"></div>
<div class="t " style="left:29px;top:25px;">Explosion croma key green screen [www.videograbber.net]</div>
<div class="a" style="left:0px;top:41px;width:1343px;height:2px;background:#0c0c0c;"></div>
<div class="a" style="left:98px;top:49px;width:1148px;height:646px;background-color:#fff;background-image:linear-gradient(45deg,#ccc 25%,transparent 25%,transparent 75%,#ccc 75%),linear-gradient(45deg,#ccc 25%,transparent 25%,transparent 75%,#ccc 75%);background-size:16px 16px;background-position:8px 0,0 8px"></div>
<svg style="left:98px;top:49px" width="1148" height="646" viewBox="463 119 1148 646"><defs><filter id="b1" x="-40%" y="-40%" width="180%" height="180%"><feGaussianBlur stdDeviation="1"/></filter><filter id="b2" x="-40%" y="-40%" width="180%" height="180%"><feGaussianBlur stdDeviation="2"/></filter><filter id="b4" x="-40%" y="-40%" width="180%" height="180%"><feGaussianBlur stdDeviation="4"/></filter><filter id="b8" x="-40%" y="-40%" width="180%" height="180%"><feGaussianBlur stdDeviation="8"/></filter><filter id="b12" x="-40%" y="-40%" width="180%" height="180%"><feGaussianBlur stdDeviation="12"/></filter><filter id="rough" x="-5%" y="-5%" width="110%" height="110%"><feTurbulence type="fractalNoise" baseFrequency="0.09" numOctaves="2" seed="11" result="n"/><feDisplacementMap in="SourceGraphic" in2="n" scale="7" xChannelSelector="R" yChannelSelector="G"/><feGaussianBlur stdDeviation=".7"/></filter><filter id="mott" x="-10%" y="-10%" width="120%" height="120%"><feGaussianBlur in="SourceGraphic" stdDeviation="7" result="g"/><feTurbulence type="fractalNoise" baseFrequency="0.055" numOctaves="3" seed="5" result="n"/><feColorMatrix in="n" type="matrix" values="0 0 0 0 0 0 0 0 0 0 0 0 0 0 0 2.6 0 0 0 -0.55" result="a"/><feComposite in="g" in2="a" operator="in"/></filter><filter id="mott2" x="-10%" y="-10%" width="120%" height="120%"><feGaussianBlur in="SourceGraphic" stdDeviation="4" result="g"/><feTurbulence type="fractalNoise" baseFrequency="0.11" numOctaves="2" seed="9" result="n"/><feColorMatrix in="n" type="matrix" values="0 0 0 0 0 0 0 0 0 0 0 0 0 0 0 3.2 0 0 0 -0.9" result="a"/><feComposite in="g" in2="a" operator="in"/></filter><mask id="mk" maskUnits="userSpaceOnUse" x="463" y="119" width="1148" height="646"><g filter="url(#rough)"><path d="M967 190C968.0 187.3 969.0 187.0 972 186C975.0 185.0 980.3 183.5 985 184C989.7 184.5 995.5 186.5 1000 189C1004.5 191.5 1007.0 196.8 1012 199C1017.0 201.2 1025.3 199.8 1030 202C1034.7 204.2 1037.5 208.2 1040 212C1042.5 215.8 1043.7 221.0 1045 225C1046.3 229.0 1045.5 232.8 1048 236C1050.5 239.2 1054.7 241.7 1060 244C1065.3 246.3 1073.0 248.7 1080 250C1087.0 251.3 1094.5 252.0 1102 252C1109.5 252.0 1118.7 250.8 1125 250C1131.3 249.2 1136.5 248.3 1140 247C1143.5 245.7 1143.5 242.7 1146 242C1148.5 241.3 1152.3 243.5 1155 243C1157.7 242.5 1159.5 238.7 1162 239C1164.5 239.3 1166.2 242.8 1170 245C1173.8 247.2 1180.0 248.7 1185 252C1190.0 255.3 1195.5 260.8 1200 265C1204.5 269.2 1208.7 272.5 1212 277C1215.3 281.5 1217.0 287.0 1220 292C1223.0 297.0 1225.8 302.0 1230 307C1234.2 312.0 1240.0 317.8 1245 322C1250.0 326.2 1254.2 328.7 1260 332C1265.8 335.3 1274.7 338.2 1280 342C1285.3 345.8 1289.5 350.3 1292 355C1294.5 359.7 1295.3 364.2 1295 370C1294.7 375.8 1292.2 384.2 1290 390C1287.8 395.8 1282.8 400.0 1282 405C1281.2 410.0 1285.3 415.0 1285 420C1284.7 425.0 1281.3 430.0 1280 435C1278.7 440.0 1276.2 445.8 1277 450C1277.8 454.2 1284.5 457.2 1285 460C1285.5 462.8 1280.5 464.5 1280 467C1279.5 469.5 1282.0 471.7 1282 475C1282.0 478.3 1282.5 483.7 1280 487C1277.5 490.3 1270.0 492.0 1267 495C1264.0 498.0 1265.7 502.2 1262 505C1258.3 507.8 1251.2 509.2 1245 512C1238.8 514.8 1230.8 517.8 1225 522C1219.2 526.2 1213.8 531.5 1210 537C1206.2 542.5 1205.3 548.7 1202 555C1198.7 561.3 1193.7 568.3 1190 575C1186.3 581.7 1184.2 589.7 1180 595C1175.8 600.3 1170.0 602.5 1165 607C1160.0 611.5 1154.7 616.5 1150 622C1145.3 627.5 1142.0 635.0 1137 640C1132.0 645.0 1126.2 648.3 1120 652C1113.8 655.7 1105.5 659.0 1100 662C1094.5 665.0 1091.2 669.2 1087 670C1082.8 670.8 1079.5 669.2 1075 667C1070.5 664.8 1065.5 659.8 1060 657C1054.5 654.2 1047.8 652.0 1042 650C1036.2 648.0 1030.8 646.7 1025 645C1019.2 643.3 1011.2 639.2 1007 640C1002.8 640.8 1003.7 647.2 1000 650C996.3 652.8 988.3 654.3 985 657C981.7 659.7 983.3 664.0 980 666C976.7 668.0 969.2 669.7 965 669C960.8 668.3 959.2 664.3 955 662C950.8 659.7 943.3 658.7 940 655C936.7 651.3 937.5 644.7 935 640C932.5 635.3 928.2 630.3 925 627C921.8 623.7 919.3 620.7 916 620C912.7 619.3 911.0 621.7 905 623C899.0 624.3 887.5 627.2 880 628C872.5 628.8 866.3 628.8 860 628C853.7 627.2 847.8 625.2 842 623C836.2 620.8 830.0 618.0 825 615C820.0 612.0 815.3 609.2 812 605C808.7 600.8 806.8 595.0 805 590C803.2 585.0 800.7 578.3 801 575C801.3 571.7 806.8 572.5 807 570C807.2 567.5 804.5 565.0 802 560C799.5 555.0 793.7 546.7 792 540C790.3 533.3 794.0 523.8 792 520C790.0 516.2 782.5 519.5 780 517C777.5 514.5 778.7 508.7 777 505C775.3 501.3 770.8 498.0 770 495C769.2 492.0 770.0 491.2 772 487C774.0 482.8 779.5 475.8 782 470C784.5 464.2 785.5 455.8 787 452C788.5 448.2 790.2 452.3 791 447C791.8 441.7 791.5 428.7 792 420C792.5 411.3 793.7 402.2 794 395C794.3 387.8 793.5 382.0 794 377C794.5 372.0 796.7 369.5 797 365C797.3 360.5 795.5 355.0 796 350C796.5 345.0 797.7 339.7 800 335C802.3 330.3 807.3 327.0 810 322C812.7 317.0 814.0 310.8 816 305C818.0 299.2 818.8 291.7 822 287C825.2 282.3 829.5 279.5 835 277C840.5 274.5 848.3 274.8 855 272C861.7 269.2 867.5 262.8 875 260C882.5 257.2 890.0 256.8 900 255C910.0 253.2 925.8 250.3 935 249C944.2 247.7 949.8 248.0 955 247C960.2 246.0 964.0 244.3 966 243C968.0 241.7 972.2 239.2 967 239C961.8 238.8 943.7 240.8 935 242C926.3 243.2 924.2 244.5 915 246C905.8 247.5 889.0 250.2 880 251C871.0 251.8 865.0 251.8 861 251C857.0 250.2 855.0 248.0 856 246C857.0 244.0 858.0 240.8 867 239C876.0 237.2 897.0 236.5 910 235C923.0 233.5 938.3 231.3 945 230C951.7 228.7 949.7 229.2 950 227C950.3 224.8 946.7 219.8 947 217C947.3 214.2 948.8 212.5 952 210C955.2 207.5 963.5 205.3 966 202C968.5 198.7 966.0 192.7 967 190Z" fill="#fff"/><path d="M812 538C815.7 536.7 827.0 537.2 835 538C843.0 538.8 852.2 542.5 860 543C867.8 543.5 875.3 541.0 882 541C888.7 541.0 895.0 540.5 900 543C905.0 545.5 907.7 551.5 912 556C916.3 560.5 922.3 566.3 926 570C929.7 573.7 933.2 575.2 934 578C934.8 580.8 933.0 584.7 931 587C929.0 589.3 924.5 593.2 922 592C919.5 590.8 918.0 583.7 916 580C914.0 576.3 912.7 573.3 910 570C907.3 566.7 903.3 562.8 900 560C896.7 557.2 893.3 553.5 890 553C886.7 552.5 882.5 554.7 880 557C877.5 559.3 878.3 564.7 875 567C871.7 569.3 864.7 570.0 860 571C855.3 572.0 851.2 573.8 847 573C842.8 572.2 839.2 568.8 835 566C830.8 563.2 825.7 559.3 822 556C818.3 552.7 814.7 549.0 813 546C811.3 543.0 808.3 539.3 812 538Z" fill="#000"/><path d="M1040 480C1040.0 476.5 1041.7 468.7 1045 466C1048.3 463.3 1055.0 463.0 1060 464C1065.0 465.0 1070.5 468.5 1075 472C1079.5 475.5 1083.7 480.8 1087 485C1090.3 489.2 1093.7 493.3 1095 497C1096.3 500.7 1096.7 504.0 1095 507C1093.3 510.0 1088.3 514.2 1085 515C1081.7 515.8 1078.0 514.2 1075 512C1072.0 509.8 1070.0 505.3 1067 502C1064.0 498.7 1060.7 494.5 1057 492C1053.3 489.5 1047.8 489.0 1045 487C1042.2 485.0 1040.0 483.5 1040 480Z" fill="#000"/><path d="M1160 312C1162.2 311.0 1164.8 317.3 1167 322C1169.2 326.7 1173.8 336.5 1173 340C1172.2 343.5 1165.5 342.7 1162 343C1158.5 343.3 1153.3 344.5 1152 342C1150.7 339.5 1152.7 333.0 1154 328C1155.3 323.0 1157.8 313.0 1160 312Z" fill="#000"/><ellipse cx="1013" cy="239" rx="10" ry="5" fill="#000" opacity="1"/><ellipse cx="1011" cy="261" rx="9" ry="5" fill="#000" opacity="1"/><ellipse cx="1175" cy="398" rx="13" ry="6" fill="#000" opacity="1"/><ellipse cx="1167" cy="421" rx="11" ry="9" fill="#000" opacity="1"/><ellipse cx="1128" cy="398" rx="6" ry="7" fill="#000" opacity="0.9"/><ellipse cx="1228" cy="357" rx="3" ry="4" fill="#000" opacity="0.9"/><ellipse cx="1135" cy="435" rx="3" ry="3" fill="#000" opacity="0.9"/><ellipse cx="1186" cy="332" rx="4" ry="7" fill="#000" opacity="0.8"/><ellipse cx="866" cy="377" rx="4" ry="5" fill="#000" opacity="1"/><ellipse cx="833" cy="397" rx="5" ry="7" fill="#000" opacity="1"/><ellipse cx="842" cy="410" rx="5" ry="5" fill="#000" opacity="1"/><ellipse cx="830" cy="495" rx="5" ry="5" fill="#000" opacity="1"/><ellipse cx="891" cy="485" rx="4" ry="4" fill="#000" opacity="1"/><ellipse cx="912" cy="501" rx="7" ry="5" fill="#000" opacity="1"/><ellipse cx="946" cy="519" rx="4" ry="3" fill="#000" opacity="1"/><ellipse cx="970" cy="467" rx="5" ry="5" fill="#000" opacity="1"/><ellipse cx="992" cy="503" rx="7" ry="5" fill="#000" opacity="1"/><ellipse cx="877" cy="584" rx="7" ry="6" fill="#000" opacity="1"/><ellipse cx="1137" cy="592" rx="3" ry="3" fill="#000" opacity="0.9"/><ellipse cx="1078" cy="532" rx="10" ry="16" fill="#000" opacity="0.35"/><ellipse cx="950" cy="463" rx="20" ry="10" fill="#000" opacity="0.4"/><ellipse cx="1150" cy="410" rx="4" ry="5" fill="#000" opacity="0.8"/><ellipse cx="1205" cy="418" rx="3" ry="5" fill="#000" opacity="0.8"/><path d="M946 521L972 512L1000 503" stroke="#000" stroke-width="4" fill="none" opacity=".8"/></g></mask></defs><ellipse cx="1100" cy="245" rx="50" ry="8" fill="#ffe9a8" opacity="0.5" filter="url(#b4)"/><ellipse cx="1268" cy="350" rx="22" ry="26" fill="#ffe9a8" opacity="0.5" filter="url(#b4)"/><ellipse cx="855" cy="612" rx="48" ry="18" fill="#ffe9a8" opacity="0.55" filter="url(#b4)"/><g mask="url(#mk)"><rect x="463" y="119" width="1148" height="646" fill="#fffbe0"/><ellipse cx="1190" cy="395" rx="80" ry="50" fill="#f9d8bc" opacity="0.7" filter="url(#b12)"/><ellipse cx="1150" cy="322" rx="50" ry="24" fill="#f9d8bc" opacity="0.65" filter="url(#b12)"/><ellipse cx="858" cy="400" rx="46" ry="44" fill="#f6c9a8" opacity="0.8" filter="url(#b12)"/><ellipse cx="1150" cy="268" rx="60" ry="15" fill="#f8d4b6" opacity="0.7" filter="url(#b12)"/><ellipse cx="858" cy="598" rx="52" ry="26" fill="#f8d0a8" opacity="0.85" filter="url(#b12)"/><ellipse cx="1025" cy="214" rx="24" ry="14" fill="#f9d8bc" opacity="0.6" filter="url(#b12)"/><path d="M818 511C820.7 501.8 831.8 485.7 841 476C850.2 466.3 862.7 461.2 873 453C883.3 444.8 891.7 434.5 903 427C914.3 419.5 927.0 413.3 941 408C955.0 402.7 974.0 396.7 987 395C1000.0 393.3 1009.8 393.2 1019 398C1028.2 402.8 1037.7 413.7 1042 424C1046.3 434.3 1046.2 450.3 1045 460C1043.8 469.7 1042.5 475.7 1035 482C1027.5 488.3 1013.5 491.5 1000 498C986.5 504.5 969.7 514.5 954 521C938.3 527.5 922.2 534.3 906 537C889.8 539.7 870.5 538.0 857 537C843.5 536.0 831.5 535.3 825 531C818.5 526.7 815.3 520.2 818 511Z" fill="#f9d7be" opacity=".95" filter="url(#b8)"/><path d="M915 528C924.7 518.8 958.3 511.8 980 505C1001.7 498.2 1027.7 483.8 1045 487C1062.3 490.2 1077.5 511.3 1084 524C1090.5 536.7 1089.3 553.7 1084 563C1078.7 572.3 1062.8 575.2 1052 580C1041.2 584.8 1037.5 590.0 1019 592C1000.5 594.0 957.2 597.3 941 592C924.8 586.7 926.3 570.7 922 560C917.7 549.3 905.3 537.2 915 528Z" fill="#fbe0d0" opacity=".95" filter="url(#b8)"/><ellipse cx="830" cy="490" rx="34" ry="40" fill="#f9d8bc" opacity=".7" filter="url(#b8)"/><ellipse cx="1066" cy="548" rx="15" ry="24" fill="#f6caae" opacity=".6" filter="url(#b4)"/><g filter="url(#mott)" opacity=".24"><path d="M818 511C820.7 501.8 831.8 485.7 841 476C850.2 466.3 862.7 461.2 873 453C883.3 444.8 891.7 434.5 903 427C914.3 419.5 927.0 413.3 941 408C955.0 402.7 974.0 396.7 987 395C1000.0 393.3 1009.8 393.2 1019 398C1028.2 402.8 1037.7 413.7 1042 424C1046.3 434.3 1046.2 450.3 1045 460C1043.8 469.7 1042.5 475.7 1035 482C1027.5 488.3 1013.5 491.5 1000 498C986.5 504.5 969.7 514.5 954 521C938.3 527.5 922.2 534.3 906 537C889.8 539.7 870.5 538.0 857 537C843.5 536.0 831.5 535.3 825 531C818.5 526.7 815.3 520.2 818 511Z" fill="#f0b48e"/><ellipse cx="1190" cy="395" rx="78" ry="48" fill="#f0b48e"/><ellipse cx="1150" cy="324" rx="48" ry="22" fill="#f0b48e"/><ellipse cx="858" cy="400" rx="42" ry="42" fill="#f0b48e"/><ellipse cx="1032" cy="262" rx="11" ry="36" fill="#f0b48e"/><ellipse cx="1076" cy="535" rx="16" ry="30" fill="#f0b48e"/><ellipse cx="858" cy="596" rx="46" ry="22" fill="#f0b48e"/><ellipse cx="1148" cy="587" rx="13" ry="15" fill="#f0b48e"/></g><g filter="url(#mott2)" opacity=".3"><ellipse cx="1170" cy="410" rx="55" ry="40" fill="#eeaa82"/><ellipse cx="1160" cy="326" rx="36" ry="20" fill="#eeaa82"/><ellipse cx="845" cy="400" rx="30" ry="34" fill="#eeaa82"/><ellipse cx="930" cy="465" rx="80" ry="35" fill="#eeaa82"/></g><ellipse cx="1149" cy="585" rx="10" ry="15" transform="rotate(35 1149 585)" fill="#f3c09c" opacity=".85" filter="url(#b2)"/><ellipse cx="1032" cy="262" rx="10" ry="34" fill="#f2b892" opacity=".8" filter="url(#b4)"/><ellipse cx="856" cy="445" rx="20" ry="22" fill="#fffdf2" opacity="0.8" filter="url(#b12)"/><ellipse cx="840" cy="330" rx="28" ry="50" fill="#fffdf2" opacity="0.7" filter="url(#b12)"/><ellipse cx="950" cy="330" rx="80" ry="50" fill="#fffdf2" opacity="0.6" filter="url(#b12)"/><ellipse cx="1150" cy="520" rx="70" ry="60" fill="#fffdf2" opacity="0.6" filter="url(#b12)"/><ellipse cx="1060" cy="620" rx="60" ry="25" fill="#fffdf2" opacity="0.6" filter="url(#b12)"/><ellipse cx="1090" cy="380" rx="30" ry="60" fill="#fffdf2" opacity="0.5" filter="url(#b12)"/><path d="M967 190C968.0 187.3 969.0 187.0 972 186C975.0 185.0 980.3 183.5 985 184C989.7 184.5 995.5 186.5 1000 189C1004.5 191.5 1007.0 196.8 1012 199C1017.0 201.2 1025.3 199.8 1030 202C1034.7 204.2 1037.5 208.2 1040 212C1042.5 215.8 1043.7 221.0 1045 225C1046.3 229.0 1045.5 232.8 1048 236C1050.5 239.2 1054.7 241.7 1060 244C1065.3 246.3 1073.0 248.7 1080 250C1087.0 251.3 1094.5 252.0 1102 252C1109.5 252.0 1118.7 250.8 1125 250C1131.3 249.2 1136.5 248.3 1140 247C1143.5 245.7 1143.5 242.7 1146 242C1148.5 241.3 1152.3 243.5 1155 243C1157.7 242.5 1159.5 238.7 1162 239C1164.5 239.3 1166.2 242.8 1170 245C1173.8 247.2 1180.0 248.7 1185 252C1190.0 255.3 1195.5 260.8 1200 265C1204.5 269.2 1208.7 272.5 1212 277C1215.3 281.5 1217.0 287.0 1220 292C1223.0 297.0 1225.8 302.0 1230 307C1234.2 312.0 1240.0 317.8 1245 322C1250.0 326.2 1254.2 328.7 1260 332C1265.8 335.3 1274.7 338.2 1280 342C1285.3 345.8 1289.5 350.3 1292 355C1294.5 359.7 1295.3 364.2 1295 370C1294.7 375.8 1292.2 384.2 1290 390C1287.8 395.8 1282.8 400.0 1282 405C1281.2 410.0 1285.3 415.0 1285 420C1284.7 425.0 1281.3 430.0 1280 435C1278.7 440.0 1276.2 445.8 1277 450C1277.8 454.2 1284.5 457.2 1285 460C1285.5 462.8 1280.5 464.5 1280 467C1279.5 469.5 1282.0 471.7 1282 475C1282.0 478.3 1282.5 483.7 1280 487C1277.5 490.3 1270.0 492.0 1267 495C1264.0 498.0 1265.7 502.2 1262 505C1258.3 507.8 1251.2 509.2 1245 512C1238.8 514.8 1230.8 517.8 1225 522C1219.2 526.2 1213.8 531.5 1210 537C1206.2 542.5 1205.3 548.7 1202 555C1198.7 561.3 1193.7 568.3 1190 575C1186.3 581.7 1184.2 589.7 1180 595C1175.8 600.3 1170.0 602.5 1165 607C1160.0 611.5 1154.7 616.5 1150 622C1145.3 627.5 1142.0 635.0 1137 640C1132.0 645.0 1126.2 648.3 1120 652C1113.8 655.7 1105.5 659.0 1100 662C1094.5 665.0 1091.2 669.2 1087 670C1082.8 670.8 1079.5 669.2 1075 667C1070.5 664.8 1065.5 659.8 1060 657C1054.5 654.2 1047.8 652.0 1042 650C1036.2 648.0 1030.8 646.7 1025 645C1019.2 643.3 1011.2 639.2 1007 640C1002.8 640.8 1003.7 647.2 1000 650C996.3 652.8 988.3 654.3 985 657C981.7 659.7 983.3 664.0 980 666C976.7 668.0 969.2 669.7 965 669C960.8 668.3 959.2 664.3 955 662C950.8 659.7 943.3 658.7 940 655C936.7 651.3 937.5 644.7 935 640C932.5 635.3 928.2 630.3 925 627C921.8 623.7 919.3 620.7 916 620C912.7 619.3 911.0 621.7 905 623C899.0 624.3 887.5 627.2 880 628C872.5 628.8 866.3 628.8 860 628C853.7 627.2 847.8 625.2 842 623C836.2 620.8 830.0 618.0 825 615C820.0 612.0 815.3 609.2 812 605C808.7 600.8 806.8 595.0 805 590C803.2 585.0 800.7 578.3 801 575C801.3 571.7 806.8 572.5 807 570C807.2 567.5 804.5 565.0 802 560C799.5 555.0 793.7 546.7 792 540C790.3 533.3 794.0 523.8 792 520C790.0 516.2 782.5 519.5 780 517C777.5 514.5 778.7 508.7 777 505C775.3 501.3 770.8 498.0 770 495C769.2 492.0 770.0 491.2 772 487C774.0 482.8 779.5 475.8 782 470C784.5 464.2 785.5 455.8 787 452C788.5 448.2 790.2 452.3 791 447C791.8 441.7 791.5 428.7 792 420C792.5 411.3 793.7 402.2 794 395C794.3 387.8 793.5 382.0 794 377C794.5 372.0 796.7 369.5 797 365C797.3 360.5 795.5 355.0 796 350C796.5 345.0 797.7 339.7 800 335C802.3 330.3 807.3 327.0 810 322C812.7 317.0 814.0 310.8 816 305C818.0 299.2 818.8 291.7 822 287C825.2 282.3 829.5 279.5 835 277C840.5 274.5 848.3 274.8 855 272C861.7 269.2 867.5 262.8 875 260C882.5 257.2 890.0 256.8 900 255C910.0 253.2 925.8 250.3 935 249C944.2 247.7 949.8 248.0 955 247C960.2 246.0 964.0 244.3 966 243C968.0 241.7 972.2 239.2 967 239C961.8 238.8 943.7 240.8 935 242C926.3 243.2 924.2 244.5 915 246C905.8 247.5 889.0 250.2 880 251C871.0 251.8 865.0 251.8 861 251C857.0 250.2 855.0 248.0 856 246C857.0 244.0 858.0 240.8 867 239C876.0 237.2 897.0 236.5 910 235C923.0 233.5 938.3 231.3 945 230C951.7 228.7 949.7 229.2 950 227C950.3 224.8 946.7 219.8 947 217C947.3 214.2 948.8 212.5 952 210C955.2 207.5 963.5 205.3 966 202C968.5 198.7 966.0 192.7 967 190Z" fill="none" stroke="#f8cead" stroke-width="16" opacity=".42" filter="url(#b4)"/><path d="M967 190C968.0 187.3 969.0 187.0 972 186C975.0 185.0 980.3 183.5 985 184C989.7 184.5 995.5 186.5 1000 189C1004.5 191.5 1007.0 196.8 1012 199C1017.0 201.2 1025.3 199.8 1030 202C1034.7 204.2 1037.5 208.2 1040 212C1042.5 215.8 1043.7 221.0 1045 225C1046.3 229.0 1045.5 232.8 1048 236C1050.5 239.2 1054.7 241.7 1060 244C1065.3 246.3 1073.0 248.7 1080 250C1087.0 251.3 1094.5 252.0 1102 252C1109.5 252.0 1118.7 250.8 1125 250C1131.3 249.2 1136.5 248.3 1140 247C1143.5 245.7 1143.5 242.7 1146 242C1148.5 241.3 1152.3 243.5 1155 243C1157.7 242.5 1159.5 238.7 1162 239C1164.5 239.3 1166.2 242.8 1170 245C1173.8 247.2 1180.0 248.7 1185 252C1190.0 255.3 1195.5 260.8 1200 265C1204.5 269.2 1208.7 272.5 1212 277C1215.3 281.5 1217.0 287.0 1220 292C1223.0 297.0 1225.8 302.0 1230 307C1234.2 312.0 1240.0 317.8 1245 322C1250.0 326.2 1254.2 328.7 1260 332C1265.8 335.3 1274.7 338.2 1280 342C1285.3 345.8 1289.5 350.3 1292 355C1294.5 359.7 1295.3 364.2 1295 370C1294.7 375.8 1292.2 384.2 1290 390C1287.8 395.8 1282.8 400.0 1282 405C1281.2 410.0 1285.3 415.0 1285 420C1284.7 425.0 1281.3 430.0 1280 435C1278.7 440.0 1276.2 445.8 1277 450C1277.8 454.2 1284.5 457.2 1285 460C1285.5 462.8 1280.5 464.5 1280 467C1279.5 469.5 1282.0 471.7 1282 475C1282.0 478.3 1282.5 483.7 1280 487C1277.5 490.3 1270.0 492.0 1267 495C1264.0 498.0 1265.7 502.2 1262 505C1258.3 507.8 1251.2 509.2 1245 512C1238.8 514.8 1230.8 517.8 1225 522C1219.2 526.2 1213.8 531.5 1210 537C1206.2 542.5 1205.3 548.7 1202 555C1198.7 561.3 1193.7 568.3 1190 575C1186.3 581.7 1184.2 589.7 1180 595C1175.8 600.3 1170.0 602.5 1165 607C1160.0 611.5 1154.7 616.5 1150 622C1145.3 627.5 1142.0 635.0 1137 640C1132.0 645.0 1126.2 648.3 1120 652C1113.8 655.7 1105.5 659.0 1100 662C1094.5 665.0 1091.2 669.2 1087 670C1082.8 670.8 1079.5 669.2 1075 667C1070.5 664.8 1065.5 659.8 1060 657C1054.5 654.2 1047.8 652.0 1042 650C1036.2 648.0 1030.8 646.7 1025 645C1019.2 643.3 1011.2 639.2 1007 640C1002.8 640.8 1003.7 647.2 1000 650C996.3 652.8 988.3 654.3 985 657C981.7 659.7 983.3 664.0 980 666C976.7 668.0 969.2 669.7 965 669C960.8 668.3 959.2 664.3 955 662C950.8 659.7 943.3 658.7 940 655C936.7 651.3 937.5 644.7 935 640C932.5 635.3 928.2 630.3 925 627C921.8 623.7 919.3 620.7 916 620C912.7 619.3 911.0 621.7 905 623C899.0 624.3 887.5 627.2 880 628C872.5 628.8 866.3 628.8 860 628C853.7 627.2 847.8 625.2 842 623C836.2 620.8 830.0 618.0 825 615C820.0 612.0 815.3 609.2 812 605C808.7 600.8 806.8 595.0 805 590C803.2 585.0 800.7 578.3 801 575C801.3 571.7 806.8 572.5 807 570C807.2 567.5 804.5 565.0 802 560C799.5 555.0 793.7 546.7 792 540C790.3 533.3 794.0 523.8 792 520C790.0 516.2 782.5 519.5 780 517C777.5 514.5 778.7 508.7 777 505C775.3 501.3 770.8 498.0 770 495C769.2 492.0 770.0 491.2 772 487C774.0 482.8 779.5 475.8 782 470C784.5 464.2 785.5 455.8 787 452C788.5 448.2 790.2 452.3 791 447C791.8 441.7 791.5 428.7 792 420C792.5 411.3 793.7 402.2 794 395C794.3 387.8 793.5 382.0 794 377C794.5 372.0 796.7 369.5 797 365C797.3 360.5 795.5 355.0 796 350C796.5 345.0 797.7 339.7 800 335C802.3 330.3 807.3 327.0 810 322C812.7 317.0 814.0 310.8 816 305C818.0 299.2 818.8 291.7 822 287C825.2 282.3 829.5 279.5 835 277C840.5 274.5 848.3 274.8 855 272C861.7 269.2 867.5 262.8 875 260C882.5 257.2 890.0 256.8 900 255C910.0 253.2 925.8 250.3 935 249C944.2 247.7 949.8 248.0 955 247C960.2 246.0 964.0 244.3 966 243C968.0 241.7 972.2 239.2 967 239C961.8 238.8 943.7 240.8 935 242C926.3 243.2 924.2 244.5 915 246C905.8 247.5 889.0 250.2 880 251C871.0 251.8 865.0 251.8 861 251C857.0 250.2 855.0 248.0 856 246C857.0 244.0 858.0 240.8 867 239C876.0 237.2 897.0 236.5 910 235C923.0 233.5 938.3 231.3 945 230C951.7 228.7 949.7 229.2 950 227C950.3 224.8 946.7 219.8 947 217C947.3 214.2 948.8 212.5 952 210C955.2 207.5 963.5 205.3 966 202C968.5 198.7 966.0 192.7 967 190Z" fill="none" stroke="#f4ba92" stroke-width="4.5" opacity=".8" filter="url(#b1)"/><path d="M812 538C815.7 536.7 827.0 537.2 835 538C843.0 538.8 852.2 542.5 860 543C867.8 543.5 875.3 541.0 882 541C888.7 541.0 895.0 540.5 900 543C905.0 545.5 907.7 551.5 912 556C916.3 560.5 922.3 566.3 926 570C929.7 573.7 933.2 575.2 934 578C934.8 580.8 933.0 584.7 931 587C929.0 589.3 924.5 593.2 922 592C919.5 590.8 918.0 583.7 916 580C914.0 576.3 912.7 573.3 910 570C907.3 566.7 903.3 562.8 900 560C896.7 557.2 893.3 553.5 890 553C886.7 552.5 882.5 554.7 880 557C877.5 559.3 878.3 564.7 875 567C871.7 569.3 864.7 570.0 860 571C855.3 572.0 851.2 573.8 847 573C842.8 572.2 839.2 568.8 835 566C830.8 563.2 825.7 559.3 822 556C818.3 552.7 814.7 549.0 813 546C811.3 543.0 808.3 539.3 812 538Z" fill="none" stroke="#f1b48e" stroke-width="5" opacity=".75" filter="url(#b2)"/><path d="M1040 480C1040.0 476.5 1041.7 468.7 1045 466C1048.3 463.3 1055.0 463.0 1060 464C1065.0 465.0 1070.5 468.5 1075 472C1079.5 475.5 1083.7 480.8 1087 485C1090.3 489.2 1093.7 493.3 1095 497C1096.3 500.7 1096.7 504.0 1095 507C1093.3 510.0 1088.3 514.2 1085 515C1081.7 515.8 1078.0 514.2 1075 512C1072.0 509.8 1070.0 505.3 1067 502C1064.0 498.7 1060.7 494.5 1057 492C1053.3 489.5 1047.8 489.0 1045 487C1042.2 485.0 1040.0 483.5 1040 480Z" fill="none" stroke="#f1b48e" stroke-width="5" opacity=".75" filter="url(#b2)"/><path d="M1160 312C1162.2 311.0 1164.8 317.3 1167 322C1169.2 326.7 1173.8 336.5 1173 340C1172.2 343.5 1165.5 342.7 1162 343C1158.5 343.3 1153.3 344.5 1152 342C1150.7 339.5 1152.7 333.0 1154 328C1155.3 323.0 1157.8 313.0 1160 312Z" fill="none" stroke="#f1b48e" stroke-width="5" opacity=".75" filter="url(#b2)"/><ellipse cx="1013" cy="239" rx="11" ry="6" fill="none" stroke="#efae86" stroke-width="4" opacity=".7" filter="url(#b2)"/><ellipse cx="1011" cy="261" rx="10" ry="6" fill="none" stroke="#efae86" stroke-width="4" opacity=".7" filter="url(#b2)"/><ellipse cx="1175" cy="398" rx="14" ry="7" fill="none" stroke="#efae86" stroke-width="4" opacity=".7" filter="url(#b2)"/><ellipse cx="1167" cy="421" rx="12" ry="10" fill="none" stroke="#efae86" stroke-width="4" opacity=".7" filter="url(#b2)"/><ellipse cx="1128" cy="398" rx="7" ry="8" fill="none" stroke="#efae86" stroke-width="4" opacity=".7" filter="url(#b2)"/><ellipse cx="866" cy="377" rx="5" ry="6" fill="none" stroke="#efae86" stroke-width="4" opacity=".7" filter="url(#b2)"/><ellipse cx="833" cy="397" rx="6" ry="8" fill="none" stroke="#efae86" stroke-width="4" opacity=".7" filter="url(#b2)"/><ellipse cx="842" cy="410" rx="6" ry="6" fill="none" stroke="#efae86" stroke-width="4" opacity=".7" filter="url(#b2)"/><ellipse cx="830" cy="495" rx="6" ry="6" fill="none" stroke="#efae86" stroke-width="4" opacity=".7" filter="url(#b2)"/><ellipse cx="891" cy="485" rx="5" ry="5" fill="none" stroke="#efae86" stroke-width="4" opacity=".7" filter="url(#b2)"/><ellipse cx="912" cy="501" rx="8" ry="6" fill="none" stroke="#efae86" stroke-width="4" opacity=".7" filter="url(#b2)"/><ellipse cx="970" cy="467" rx="6" ry="6" fill="none" stroke="#efae86" stroke-width="4" opacity=".7" filter="url(#b2)"/><ellipse cx="992" cy="503" rx="8" ry="6" fill="none" stroke="#efae86" stroke-width="4" opacity=".7" filter="url(#b2)"/><ellipse cx="877" cy="584" rx="8" ry="7" fill="none" stroke="#efae86" stroke-width="4" opacity=".7" filter="url(#b2)"/></g></svg>
<div class="a" style="left:95px;top:46px;width:6px;height:6px;background:#a9d4cc;border-right:1px solid #555;border-bottom:1px solid #555"></div>
<div class="a" style="left:668px;top:46px;width:6px;height:6px;background:#a9d4cc;border-right:1px solid #555;border-bottom:1px solid #555"></div>
<div class="a" style="left:1243px;top:46px;width:6px;height:6px;background:#a9d4cc;border-right:1px solid #555;border-bottom:1px solid #555"></div>
<div class="a" style="left:95px;top:368px;width:6px;height:6px;background:#a9d4cc;border-right:1px solid #555;border-bottom:1px solid #555"></div>
<div class="a" style="left:1243px;top:368px;width:6px;height:6px;background:#a9d4cc;border-right:1px solid #555;border-bottom:1px solid #555"></div>
<div class="a" style="left:95px;top:692px;width:6px;height:6px;background:#a9d4cc;border-right:1px solid #555;border-bottom:1px solid #555"></div>
<div class="a" style="left:668px;top:692px;width:6px;height:6px;background:#a9d4cc;border-right:1px solid #555;border-bottom:1px solid #555"></div>
<div class="a" style="left:1243px;top:692px;width:6px;height:6px;background:#a9d4cc;border-right:1px solid #555;border-bottom:1px solid #555"></div>
<svg style="left:666px;top:366px" width="13" height="13" viewBox="0 0 13 13"><circle cx="6.5" cy="6.5" r="2.6" fill="none" stroke="#7f9a96" stroke-width="1"/><path d="M6.5 0V4M6.5 9V13M0 6.5H4M9 6.5H13" stroke="#7f9a96" stroke-width="1"/></svg>
<div class="a" style="left:0px;top:699px;width:1343px;height:1px;background:#0a0a0a;"></div>
<div class="a" style="left:0px;top:700px;width:1344px;height:23px;background:#272727;"></div>
<svg style="left:5px;top:706px" width="14" height="11" viewBox="0 0 14 11"><rect x=".5" y=".5" width="13" height="10" fill="none" stroke="#8a8a8a"/><rect x="2.5" y="3" width="5" height="5.5" fill="#8a8a8a"/><rect x="9" y="3" width="3" height="2" fill="#8a8a8a"/><rect x="9" y="6.5" width="3" height="2" fill="#8a8a8a"/></svg>
<div class="a" style="left:24px;top:703px;width:68px;height:17px;background:#262626;border:1px solid #0a0a0a;box-shadow:0 1px 0 rgba(255,255,255,.05)"></div>
<div class="t " style="left:31px;top:705px;">(89,7%)</div>
<div class="a" style="left:74px;top:707px;width:1px;height:8px;background:#4c4c4c;"></div>
<svg style="left:79px;top:709px" width="9" height="7"><path d="M0 0L9 0L4.5 6.5Z" fill="#a0a0a0"/></svg>
<svg style="left:96px;top:705px" width="15" height="13" viewBox="0 0 15 13"><rect x="2" y="2.5" width="11" height="8" fill="none" stroke="#b4b4b4" stroke-width="1.2"/><path d="M7.5 0V13M0 6.5H15" stroke="#b4b4b4" stroke-width="1" stroke-dasharray="2.5 2"/></svg>
<div class="a" style="left:116px;top:703px;width:19px;height:17px;background:#191919;border:1px solid #0a0a0a"></div>
<svg style="left:119px;top:706px" width="13" height="11" viewBox="0 0 13 11"><rect x=".8" y=".8" width="11.4" height="9.4" rx="2" fill="none" stroke="#d0d0d0" stroke-width="1.3" stroke-dasharray="2.4 1.6"/></svg>
<div class="a" style="left:139px;top:703px;width:67px;height:17px;background:#262626;border:1px solid #0a0a0a;box-shadow:0 1px 0 rgba(255,255,255,.05)"></div>
<div class="t " style="left:145px;top:705px;">0:00:00:13</div>
<svg style="left:211px;top:706px" width="14" height="11" viewBox="0 0 14 11"><path d="M0 2H3.5L4.5 .5H9.5L10.5 2H14V11H0Z" fill="#b4b4b4"/><circle cx="7" cy="6.3" r="2.8" fill="#2a2a2a"/><circle cx="7" cy="6.3" r="1.5" fill="#b4b4b4"/></svg>
<svg style="left:234px;top:705px" width="12" height="13" viewBox="0 0 12 13"><circle cx="6" cy="3" r="2.8" fill="#4e4e4e"/><path d="M.5 13C.5 8 3 6.5 6 6.5S11.5 8 11.5 13Z" fill="#4e4e4e"/></svg>
<svg style="left:255px;top:705px" width="15" height="14" viewBox="0 0 15 14"><circle cx="7" cy="4" r="3.3" fill="#c83c3c"/><circle cx="4" cy="9" r="3.3" fill="#3ca63c"/><circle cx="10" cy="9" r="3.3" fill="#3c5cc8"/><path d="M12.5 13.5H14.5V11.5Z" fill="#999"/></svg>
<div class="a" style="left:275px;top:703px;width:83px;height:17px;background:#262626;border:1px solid #0a0a0a;box-shadow:0 1px 0 rgba(255,255,255,.05)"></div>
<div class="t " style="left:281px;top:705px;">Completa</div>
<div class="a" style="left:341px;top:707px;width:1px;height:8px;background:#4c4c4c;"></div>
<svg style="left:345px;top:709px" width="9" height="7"><path d="M0 0L9 0L4.5 6.5Z" fill="#a0a0a0"/></svg>
<svg style="left:364px;top:706px" width="13" height="11" viewBox="0 0 13 11"><rect x=".6" y=".6" width="11.8" height="9.8" fill="none" stroke="#b4b4b4" stroke-width="1.2"/><rect x="3.5" y="3.5" width="6" height="4" fill="#b4b4b4"/></svg>
<div class="a" style="left:384px;top:703px;width:17px;height:17px;background:#191919;border:1px solid #0a0a0a"></div>
<div class="a" style="left:387px;top:706px;width:11px;height:11px;border:1px solid #ccc;background-color:#ddd;background-image:linear-gradient(45deg,#444 25%,transparent 25%,transparent 75%,#444 75%),linear-gradient(45deg,#444 25%,transparent 25%,transparent 75%,#444 75%);background-size:4px 4px;background-position:0 0,2px 2px"></div>
<div class="a" style="left:405px;top:703px;width:103px;height:17px;background:#262626;border:1px solid #0a0a0a;box-shadow:0 1px 0 rgba(255,255,255,.05)"></div>
<div class="t " style="left:412px;top:705px;">Cámara activa</div>
<div class="a" style="left:491px;top:707px;width:1px;height:8px;background:#4c4c4c;"></div>
<svg style="left:496px;top:709px" width="9" height="7"><path d="M0 0L9 0L4.5 6.5Z" fill="#a0a0a0"/></svg>
<div class="a" style="left:513px;top:703px;width:67px;height:17px;background:#262626;border:1px solid #0a0a0a;box-shadow:0 1px 0 rgba(255,255,255,.05)"></div>
<div class="t " style="left:520px;top:705px;">1 Vista</div>
<div class="a" style="left:563px;top:707px;width:1px;height:8px;background:#4c4c4c;"></div>
<svg style="left:568px;top:709px" width="9" height="7"><path d="M0 0L9 0L4.5 6.5Z" fill="#a0a0a0"/></svg>
<svg style="left:587px;top:705px" width="13" height="13" viewBox="0 0 13 13"><rect x="1" y="3.5" width="11" height="8.5" fill="none" stroke="#b4b4b4" stroke-width="1.2"/><path d="M1 1H12M3 0V3M10 0V3" stroke="#b4b4b4" stroke-width="1.2"/></svg>
<svg style="left:608px;top:705px" width="14" height="13" viewBox="0 0 14 13"><rect x=".6" y=".6" width="11" height="11" fill="none" stroke="#b4b4b4" stroke-width="1.2"/><path d="M7 2L4 6.5H6.5L5 10.5L9 5.5H6.5Z" fill="#b4b4b4"/><path d="M11.5 13H14V10.5Z" fill="#999"/></svg>
<svg style="left:630px;top:705px" width="13" height="12" viewBox="0 0 13 12"><rect x=".6" y="3" width="11.8" height="8.4" fill="none" stroke="#b4b4b4" stroke-width="1.2"/><path d="M4 3V11M8.5 3V11M2 1H11" stroke="#b4b4b4" stroke-width="1.4"/></svg>
<svg style="left:651px;top:705px" width="14" height="13" viewBox="0 0 14 13"><rect x="4.5" y="0" width="5" height="4" fill="#b4b4b4"/><rect x="0" y="8.5" width="5" height="4" fill="#b4b4b4"/><rect x="9" y="8.5" width="5" height="4" fill="#b4b4b4"/><path d="M7 4V6.5M2.5 8.5V6.5H11.5V8.5" fill="none" stroke="#b4b4b4" stroke-width="1.1"/></svg>
<div class="a" style="left:670px;top:704px;width:1px;height:15px;background:#0c0c0c;box-shadow:1px 0 0 #343434"></div>
<svg style="left:675px;top:704px" width="15" height="15" viewBox="0 0 15 15"><g transform="translate(7.5 7.5)" fill="#b4b4b4"><path d="M0 0L-1 -6.5L3 -5Z"/><path d="M0 0L-1 -6.5L3 -5Z" transform="rotate(72)"/><path d="M0 0L-1 -6.5L3 -5Z" transform="rotate(144)"/><path d="M0 0L-1 -6.5L3 -5Z" transform="rotate(216)"/><path d="M0 0L-1 -6.5L3 -5Z" transform="rotate(288)"/></g></svg>
<div class="t o" style="left:696px;top:705px"><span class="u">+0,0</span></div>
</div>
<div class="a" style="left:1714px;top:70px;width:206px;height:134px;background:#262626;"></div>
<div class="a" style="left:1714px;top:70px;width:206px;height:19px;background:#282828;"></div>
<div class="a" style="left:1714px;top:70px;width:86px;height:19px;background:#262626;border-top:1px solid #333"></div>
<div class="a" style="left:1718px;top:75px;width:1px;height:10px;background:repeating-linear-gradient(#707070 0 1px,transparent 1px 2px)"></div><div class="a" style="left:1720px;top:75px;width:1px;height:10px;background:repeating-linear-gradient(#707070 0 1px,transparent 1px 2px)"></div>
<div class="t " style="left:1724px;top:74px;color:#c0c0c0">Información</div>
<svg style="left:1790px;top:76px" width="7" height="7"><path d="M1 1L6 6M6 1L1 6" stroke="#858585" stroke-width="1"/></svg>
<div class="a" style="left:1801px;top:71px;width:56px;height:17px;background:#1e1e1e;border:1px solid #0c0c0c"></div>
<div class="t " style="left:1812px;top:74px;color:#6c6c6c">Audio</div>
<div class="a" style="left:1857px;top:71px;width:50px;height:17px;background:#1e1e1e;border:1px solid #0c0c0c"></div>
<svg style="left:1886px;top:75px" width="14" height="9"><path d="M0 1h5L2.5 4Z" fill="#b0b0b0"/><path d="M6 1.5h8M6 3.5h8M6 5.5h8M6 7.5h8" stroke="#b0b0b0" stroke-width="1"/></svg>
<div class="a" style="left:1912px;top:74px;width:1px;height:10px;background:repeating-linear-gradient(#707070 0 1px,transparent 1px 2px)"></div><div class="a" style="left:1914px;top:74px;width:1px;height:10px;background:repeating-linear-gradient(#707070 0 1px,transparent 1px 2px)"></div>
<div class="a" style="left:1721px;top:107px;width:20px;height:20px;background:#000;"></div>
<div class="t " style="left:1746px;top:95px;">R:</div>
<div class="t " style="left:1746px;top:108px;">G:</div>
<div class="t " style="left:1746px;top:121px;">B:</div>
<div class="t " style="left:1746px;top:135px;">A:</div>
<div class="t " style="left:1766px;top:135px;">0</div>
<div class="a" style="left:1814px;top:97px;width:1px;height:50px;background:#121212;"></div>
<svg style="left:1822px;top:115px" width="9" height="9"><path d="M4.5 0V9M0 4.5H9" stroke="#c0c0c0" stroke-width="1"/></svg>
<div class="t " style="left:1837px;top:95px;">X:</div>
<div class="t " style="left:1854px;top:95px;">128</div>
<div class="t " style="left:1838px;top:108px;">Y:</div>
<div class="t " style="left:1855px;top:108px;">688</div>
<div class="a" style="left:1719px;top:153px;width:191px;height:1px;background:#121212;"></div>
<div class="a" style="left:1714px;top:209px;width:206px;height:131px;background:#262626;"></div>
<div class="a" style="left:1714px;top:209px;width:206px;height:19px;background:#282828;"></div>
<div class="a" style="left:1714px;top:209px;width:106px;height:19px;background:#262626;border-top:1px solid #333"></div>
<div class="a" style="left:1718px;top:214px;width:1px;height:10px;background:repeating-linear-gradient(#707070 0 1px,transparent 1px 2px)"></div><div class="a" style="left:1720px;top:214px;width:1px;height:10px;background:repeating-linear-gradient(#707070 0 1px,transparent 1px 2px)"></div>
<div class="t " style="left:1724px;top:213px;color:#c0c0c0">Previsualización</div>
<svg style="left:1811px;top:215px" width="7" height="7"><path d="M1 1L6 6M6 1L1 6" stroke="#858585" stroke-width="1"/></svg>
<div class="a" style="left:1820px;top:210px;width:87px;height:17px;background:#1e1e1e;border:1px solid #0c0c0c"></div>
<svg style="left:1886px;top:214px" width="14" height="9"><path d="M0 1h5L2.5 4Z" fill="#b0b0b0"/><path d="M6 1.5h8M6 3.5h8M6 5.5h8M6 7.5h8" stroke="#b0b0b0" stroke-width="1"/></svg>
<div class="a" style="left:1912px;top:213px;width:1px;height:10px;background:repeating-linear-gradient(#707070 0 1px,transparent 1px 2px)"></div><div class="a" style="left:1914px;top:213px;width:1px;height:10px;background:repeating-linear-gradient(#707070 0 1px,transparent 1px 2px)"></div>
<svg style="left:1724px;top:236px" width="16" height="13"><path d="M0 0H2V13H0ZM11 0V13L2.5 6.5Z" fill="#c4c4c4"/></svg>
<svg style="left:1748px;top:236px" width="16" height="13"><path d="M8 0V13L0 6.5ZM10 0H12V13H10Z" fill="#c4c4c4"/></svg>
<svg style="left:1772px;top:236px" width="16" height="13"><path d="M0 0L10 6.5L0 13Z" fill="#c4c4c4"/></svg>
<svg style="left:1797px;top:236px" width="16" height="13"><path d="M0 0H2V13H0ZM4 0L12 6.5L4 13Z" fill="#c4c4c4"/></svg>
<svg style="left:1821px;top:236px" width="16" height="13"><path d="M0 0L8.5 6.5L0 13ZM9 0H11V13H9Z" fill="#c4c4c4"/></svg>
<svg style="left:1847px;top:236px" width="16" height="13"><path d="M0 4.5H3L7 1V12L3 8.5H0Z" fill="#c4c4c4"/><path d="M9 3.5C10.5 5 10.5 8 9 9.5M11 1.5C13.5 4 13.5 9 11 11.5" stroke="#c4c4c4" stroke-width="1.3" fill="none"/></svg>
<svg style="left:1874px;top:236px" width="16" height="13"><path d="M1 6V12.5H14V8" fill="none" stroke="#c4c4c4" stroke-width="1.8"/><path d="M4 8V3.5H9.5V.5L14.5 4.5L9.5 8.5V5.5H6V8Z" fill="#c4c4c4"/></svg>
<svg style="left:1899px;top:236px" width="16" height="13"><path d="M0 0H1.4V13H0ZM2.8 0H4.2V13H2.8ZM5.6 0H7V13H5.6ZM8 0L15 6.5L8 13Z" fill="#c4c4c4"/></svg>
<div class="a" style="left:1719px;top:256px;width:196px;height:1px;background:#121212;"></div>
<div class="a" style="left:1720px;top:263px;width:170px;height:15px;background:#262626;border:1px solid #0a0a0a;overflow:hidden"><div class="t" style="left:6px;top:0">Mayús+Opciones de previ...</div></div>
<div class="a" style="left:1872px;top:266px;width:1px;height:9px;background:#4c4c4c;"></div>
<svg style="left:1877px;top:268px" width="9" height="7"><path d="M0 0L9 0L4.5 6.5Z" fill="#a0a0a0"/></svg>
<div class="t " style="left:1721px;top:285px;">Veloc. fot.</div>
<div class="t " style="left:1791px;top:285px;">Omitir</div>
<div class="t " style="left:1838px;top:285px;">Resolución</div>
<div class="a" style="left:1720px;top:302px;width:64px;height:15px;background:#262626;border:1px solid #0a0a0a"></div>
<div class="a" style="left:1721px;top:303px;width:44px;height:13px;background:#a2a2a2;box-shadow:inset 1px 1px 0 #777"></div>
<div class="t " style="left:1724px;top:303px;color:#0a0a0a">Autom.</div>
<svg style="left:1771px;top:307px" width="9" height="7"><path d="M0 0L9 0L4.5 6.5Z" fill="#a0a0a0"/></svg>
<div class="a" style="left:1790px;top:302px;width:41px;height:15px;background:#262626;border:1px solid #0a0a0a"></div>
<div class="a" style="left:1791px;top:303px;width:21px;height:13px;background:#a2a2a2;box-shadow:inset 1px 1px 0 #777"></div>
<div class="t " style="left:1794px;top:303px;color:#0a0a0a">1</div>
<svg style="left:1817px;top:307px" width="9" height="7"><path d="M0 0L9 0L4.5 6.5Z" fill="#a0a0a0"/></svg>
<div class="a" style="left:1837px;top:302px;width:79px;height:15px;background:#262626;border:1px solid #0a0a0a"></div>
<div class="t " style="left:1844px;top:303px;">Mitad</div>
<div class="a" style="left:1898px;top:305px;width:1px;height:9px;background:#4c4c4c;"></div>
<svg style="left:1903px;top:307px" width="9" height="7"><path d="M0 0L9 0L4.5 6.5Z" fill="#a0a0a0"/></svg>
<div class="a" style="left:1720px;top:324px;width:12px;height:12px;background:#2c2c2c;border:1px solid #0a0a0a"></div>
<div class="a" style="left:1837px;top:324px;width:12px;height:12px;background:#2c2c2c;border:1px solid #0a0a0a"></div>
<div class="t " style="left:1736px;top:324px;">Desde tiempo act.</div>
<div class="t " style="left:1853px;top:324px;">Pant. compl.</div>
<div class="a" style="left:1714px;top:345px;width:137px;height:3px;background:#2b2b2b;"></div>
<div class="a" style="left:1714px;top:351px;width:206px;height:441px;background:#262626;"></div>
<div class="a" style="left:1714px;top:351px;width:206px;height:19px;background:#282828;"></div>
<div class="a" style="left:1714px;top:351px;width:167px;height:19px;background:#262626;border-top:1px solid #333"></div>
<div class="a" style="left:1718px;top:356px;width:1px;height:10px;background:repeating-linear-gradient(#707070 0 1px,transparent 1px 2px)"></div><div class="a" style="left:1720px;top:356px;width:1px;height:10px;background:repeating-linear-gradient(#707070 0 1px,transparent 1px 2px)"></div>
<div class="t " style="left:0px;top:355px;color:#c0c0c0"></div>
<div class="a" style="left:1881px;top:352px;width:26px;height:17px;background:#1e1e1e;border:1px solid #0c0c0c"></div>
<svg style="left:1886px;top:356px" width="14" height="9"><path d="M0 1h5L2.5 4Z" fill="#b0b0b0"/><path d="M6 1.5h8M6 3.5h8M6 5.5h8M6 7.5h8" stroke="#b0b0b0" stroke-width="1"/></svg>
<div class="a" style="left:1912px;top:355px;width:1px;height:10px;background:repeating-linear-gradient(#707070 0 1px,transparent 1px 2px)"></div><div class="a" style="left:1914px;top:355px;width:1px;height:10px;background:repeating-linear-gradient(#707070 0 1px,transparent 1px 2px)"></div>
<div class="a" style="left:1724px;top:355px;width:156px;height:14px;overflow:hidden"><div class="t" style="left:0;top:0;color:#c0c0c0">Efectos y ajustes preestablecidos</div></div>
<div class="a" style="left:1719px;top:374px;width:194px;height:17px;background:#a2a2a2;border:1px solid #0a0a0a;box-shadow:inset 0 1px 0 #7f7f7f"></div>
<svg style="left:1723px;top:377px" width="20" height="12" viewBox="0 0 20 12"><circle cx="7" cy="4.6" r="3.6" fill="none" stroke="#111" stroke-width="1.3"/><path d="M4.6 7.2L.8 11.2" stroke="#111" stroke-width="1.8"/><path d="M12.5 2.5H18L15.2 6Z" fill="#b8b8b8" stroke="#8a8a8a" stroke-width=".6"/></svg>
<div class="a" style="left:1714px;top:395px;width:206px;height:1px;background:#0e0e0e;"></div>
<div class="a" style="left:1714px;top:396px;width:187px;height:379px;overflow:hidden">
<svg style="left:5px;top:4px" width="7" height="9"><path d="M0 0L6.5 4.5L0 9Z" fill="#8e8e8e"/></svg>
<div class="t " style="left:15px;top:2px;">* Ajust...ablecidos de animación</div>
<div class="rs" style="top:16px;width:187px"></div>
<svg style="left:5px;top:21px" width="7" height="9"><path d="M0 0L6.5 4.5L0 9Z" fill="#8e8e8e"/></svg>
<div class="t " style="left:15px;top:19px;">Audio</div>
<div class="rs" style="top:33px;width:187px"></div>
<svg style="left:5px;top:38px" width="7" height="9"><path d="M0 0L6.5 4.5L0 9Z" fill="#8e8e8e"/></svg>
<div class="t " style="left:15px;top:36px;">Canal</div>
<div class="rs" style="top:50px;width:187px"></div>
<svg style="left:5px;top:55px" width="7" height="9"><path d="M0 0L6.5 4.5L0 9Z" fill="#8e8e8e"/></svg>
<div class="t " style="left:15px;top:53px;">Canal 3D</div>
<div class="rs" style="top:67px;width:187px"></div>
<svg style="left:5px;top:72px" width="7" height="9"><path d="M0 0L6.5 4.5L0 9Z" fill="#8e8e8e"/></svg>
<div class="t " style="left:15px;top:70px;">Controles de expresión</div>
<div class="rs" style="top:84px;width:187px"></div>
<svg style="left:5px;top:89px" width="7" height="9"><path d="M0 0L6.5 4.5L0 9Z" fill="#8e8e8e"/></svg>
<div class="t " style="left:15px;top:87px;">Corrección de color</div>
<div class="rs" style="top:101px;width:187px"></div>
<svg style="left:5px;top:106px" width="7" height="9"><path d="M0 0L6.5 4.5L0 9Z" fill="#8e8e8e"/></svg>
<div class="t " style="left:15px;top:104px;">Desenfocar y enfocar</div>
<div class="rs" style="top:118px;width:187px"></div>
<svg style="left:5px;top:123px" width="7" height="9"><path d="M0 0L6.5 4.5L0 9Z" fill="#8e8e8e"/></svg>
<div class="t " style="left:15px;top:121px;">Digieffects Damage v2.5</div>
<div class="rs" style="top:135px;width:187px"></div>
<svg style="left:5px;top:140px" width="7" height="9"><path d="M0 0L6.5 4.5L0 9Z" fill="#8e8e8e"/></svg>
<div class="t " style="left:15px;top:138px;">Distorsionar</div>
<div class="rs" style="top:152px;width:187px"></div>
<svg style="left:5px;top:157px" width="7" height="9"><path d="M0 0L6.5 4.5L0 9Z" fill="#8e8e8e"/></svg>
<div class="t " style="left:15px;top:155px;">Estilizar</div>
<div class="rs" style="top:169px;width:187px"></div>
<svg style="left:5px;top:174px" width="7" height="9"><path d="M0 0L6.5 4.5L0 9Z" fill="#8e8e8e"/></svg>
<div class="t " style="left:15px;top:172px;">Generar</div>
<div class="rs" style="top:186px;width:187px"></div>
<svg style="left:5px;top:191px" width="7" height="9"><path d="M0 0L6.5 4.5L0 9Z" fill="#8e8e8e"/></svg>
<div class="t " style="left:15px;top:189px;">Incrustación</div>
<div class="rs" style="top:203px;width:187px"></div>
<svg style="left:5px;top:208px" width="7" height="9"><path d="M0 0L6.5 4.5L0 9Z" fill="#8e8e8e"/></svg>
<div class="t " style="left:15px;top:206px;">Key Correct</div>
<div class="rs" style="top:220px;width:187px"></div>
<svg style="left:5px;top:225px" width="7" height="9"><path d="M0 0L6.5 4.5L0 9Z" fill="#8e8e8e"/></svg>
<div class="t " style="left:15px;top:223px;">Magic Bullet Colorista</div>
<div class="rs" style="top:237px;width:187px"></div>
<svg style="left:5px;top:242px" width="7" height="9"><path d="M0 0L6.5 4.5L0 9Z" fill="#8e8e8e"/></svg>
<div class="t " style="left:15px;top:240px;">Magic Bullet Cosmo</div>
<div class="rs" style="top:254px;width:187px"></div>
<svg style="left:5px;top:259px" width="7" height="9"><path d="M0 0L6.5 4.5L0 9Z" fill="#8e8e8e"/></svg>
<div class="t " style="left:15px;top:257px;">Magic Bullet Denoiser</div>
<div class="rs" style="top:271px;width:187px"></div>
<svg style="left:5px;top:276px" width="7" height="9"><path d="M0 0L6.5 4.5L0 9Z" fill="#8e8e8e"/></svg>
<div class="t " style="left:15px;top:274px;">Magic Bullet Frames</div>
<div class="rs" style="top:288px;width:187px"></div>
<svg style="left:5px;top:293px" width="7" height="9"><path d="M0 0L6.5 4.5L0 9Z" fill="#8e8e8e"/></svg>
<div class="t " style="left:15px;top:291px;">Magic Bullet InstantHD</div>
<div class="rs" style="top:305px;width:187px"></div>
<svg style="left:5px;top:310px" width="7" height="9"><path d="M0 0L6.5 4.5L0 9Z" fill="#8e8e8e"/></svg>
<div class="t " style="left:15px;top:308px;">Magic Bullet Looks</div>
<div class="rs" style="top:322px;width:187px"></div>
<svg style="left:5px;top:327px" width="7" height="9"><path d="M0 0L6.5 4.5L0 9Z" fill="#8e8e8e"/></svg>
<div class="t " style="left:15px;top:325px;">Magic Bullet MisFire</div>
<div class="rs" style="top:339px;width:187px"></div>
<svg style="left:5px;top:344px" width="7" height="9"><path d="M0 0L6.5 4.5L0 9Z" fill="#8e8e8e"/></svg>
<div class="t " style="left:15px;top:342px;">Magic Bullet Mojo</div>
<div class="rs" style="top:356px;width:187px"></div>
<svg style="left:5px;top:361px" width="7" height="9"><path d="M0 0L6.5 4.5L0 9Z" fill="#8e8e8e"/></svg>
<div class="t " style="left:15px;top:359px;">Mate</div>
<div class="rs" style="top:373px;width:187px"></div>
<svg style="left:5px;top:378px" width="7" height="9"><path d="M0 0L6.5 4.5L0 9Z" fill="#8e8e8e"/></svg>
<div class="t " style="left:15px;top:376px;">Simulación</div>
<div class="rs" style="top:390px;width:187px"></div>
</div>
<div class="a" style="left:1901px;top:396px;width:17px;height:379px;background:#202020;border-left:1px solid #121212"></div>
<div class="a" style="left:1902px;top:414px;width:15px;height:201px;background:#262626;border:1px solid #141414"></div>
<svg style="left:1905px;top:401px" width="10" height="7"><path d="M0 7H10L5 0Z" fill="#8e8e8e"/></svg>
<svg style="left:1905px;top:763px" width="10" height="7"><path d="M0 0H10L5 7Z" fill="#8e8e8e"/></svg>
<div class="a" style="left:1714px;top:775px;width:206px;height:1px;background:#0e0e0e;"></div>
<div class="a" style="left:1901px;top:776px;width:1px;height:16px;background:#121212;"></div>
<svg style="left:1883px;top:779px" width="10" height="10"><rect x="1.5" y=".5" width="8" height="8" fill="#b0b0b0"/><rect x=".5" y="2.5" width="6" height="7" fill="#2a2a2a" stroke="#b0b0b0"/><path d="M2 5L5 8M5 5.5V8H2.5" stroke="#b0b0b0" stroke-width=".8" fill="none"/></svg>
<div class="a" style="left:1714px;top:799px;width:206px;height:281px;background:#262626;"></div>
<div class="a" style="left:1714px;top:799px;width:206px;height:19px;background:#282828;"></div>
<div class="a" style="left:1714px;top:799px;width:63px;height:19px;background:#262626;border-top:1px solid #333"></div>
<div class="a" style="left:1718px;top:804px;width:1px;height:10px;background:repeating-linear-gradient(#707070 0 1px,transparent 1px 2px)"></div><div class="a" style="left:1720px;top:804px;width:1px;height:10px;background:repeating-linear-gradient(#707070 0 1px,transparent 1px 2px)"></div>
<div class="t " style="left:1724px;top:803px;color:#c0c0c0">Párrafo</div>
<svg style="left:1767px;top:805px" width="7" height="7"><path d="M1 1L6 6M6 1L1 6" stroke="#858585" stroke-width="1"/></svg>
<div class="a" style="left:1777px;top:800px;width:62px;height:17px;background:#1e1e1e;border:1px solid #0c0c0c"></div>
<div class="t " style="left:1788px;top:803px;color:#6c6c6c">Alinear</div>
<div class="a" style="left:1839px;top:800px;width:68px;height:17px;background:#1e1e1e;border:1px solid #0c0c0c"></div>
<svg style="left:1886px;top:804px" width="14" height="9"><path d="M0 1h5L2.5 4Z" fill="#b0b0b0"/><path d="M6 1.5h8M6 3.5h8M6 5.5h8M6 7.5h8" stroke="#b0b0b0" stroke-width="1"/></svg>
<div class="a" style="left:1912px;top:803px;width:1px;height:10px;background:repeating-linear-gradient(#707070 0 1px,transparent 1px 2px)"></div><div class="a" style="left:1914px;top:803px;width:1px;height:10px;background:repeating-linear-gradient(#707070 0 1px,transparent 1px 2px)"></div>
<div class="a" style="left:1720px;top:823px;width:20px;height:21px;background:#131313;border:1px solid #060606"></div>
<svg style="left:1723px;top:826px" width="14" height="15"><rect x="0" y="0.6" width="14" height="1.2" fill="#d0d0d0"/><rect x="0" y="3.0" width="9" height="1.2" fill="#d0d0d0"/><rect x="0" y="5.4" width="14" height="1.2" fill="#d0d0d0"/><rect x="0" y="7.8" width="9" height="1.2" fill="#d0d0d0"/><rect x="0" y="10.2" width="14" height="1.2" fill="#d0d0d0"/><rect x="0" y="12.6" width="9" height="1.2" fill="#d0d0d0"/></svg>
<svg style="left:1748px;top:826px" width="14" height="15"><rect x="0" y="0.6" width="14" height="1.2" fill="#d0d0d0"/><rect x="2.5" y="3.0" width="9" height="1.2" fill="#d0d0d0"/><rect x="0" y="5.4" width="14" height="1.2" fill="#d0d0d0"/><rect x="2.5" y="7.8" width="9" height="1.2" fill="#d0d0d0"/><rect x="0" y="10.2" width="14" height="1.2" fill="#d0d0d0"/><rect x="2.5" y="12.6" width="9" height="1.2" fill="#d0d0d0"/></svg>
<svg style="left:1773px;top:826px" width="14" height="15"><rect x="0" y="0.6" width="14" height="1.2" fill="#d0d0d0"/><rect x="5" y="3.0" width="9" height="1.2" fill="#d0d0d0"/><rect x="0" y="5.4" width="14" height="1.2" fill="#d0d0d0"/><rect x="5" y="7.8" width="9" height="1.2" fill="#d0d0d0"/><rect x="0" y="10.2" width="14" height="1.2" fill="#d0d0d0"/><rect x="5" y="12.6" width="9" height="1.2" fill="#d0d0d0"/></svg>
<svg style="left:1803px;top:826px" width="14" height="15"><rect x="0" y="0.6" width="14" height="1.2" fill="#d0d0d0"/><rect x="0" y="3.0" width="14" height="1.2" fill="#d0d0d0"/><rect x="0" y="5.4" width="14" height="1.2" fill="#d0d0d0"/><rect x="0" y="7.8" width="14" height="1.2" fill="#d0d0d0"/><rect x="0" y="10.2" width="14" height="1.2" fill="#d0d0d0"/><rect x="0" y="12.6" width="9" height="1.2" fill="#d0d0d0"/></svg>
<svg style="left:1828px;top:826px" width="14" height="15"><rect x="0" y="0.6" width="14" height="1.2" fill="#d0d0d0"/><rect x="0" y="3.0" width="14" height="1.2" fill="#d0d0d0"/><rect x="0" y="5.4" width="14" height="1.2" fill="#d0d0d0"/><rect x="0" y="7.8" width="14" height="1.2" fill="#d0d0d0"/><rect x="0" y="10.2" width="14" height="1.2" fill="#d0d0d0"/><rect x="2.5" y="12.6" width="9" height="1.2" fill="#d0d0d0"/></svg>
<svg style="left:1853px;top:826px" width="14" height="15"><rect x="0" y="0.6" width="14" height="1.2" fill="#d0d0d0"/><rect x="0" y="3.0" width="14" height="1.2" fill="#d0d0d0"/><rect x="0" y="5.4" width="14" height="1.2" fill="#d0d0d0"/><rect x="0" y="7.8" width="14" height="1.2" fill="#d0d0d0"/><rect x="0" y="10.2" width="14" height="1.2" fill="#d0d0d0"/><rect x="5" y="12.6" width="9" height="1.2" fill="#d0d0d0"/></svg>
<svg style="left:1883px;top:826px" width="14" height="15"><rect x="0" y="0.6" width="14" height="1.2" fill="#d0d0d0"/><rect x="0" y="3.0" width="14" height="1.2" fill="#d0d0d0"/><rect x="0" y="5.4" width="14" height="1.2" fill="#d0d0d0"/><rect x="0" y="7.8" width="14" height="1.2" fill="#d0d0d0"/><rect x="0" y="10.2" width="14" height="1.2" fill="#d0d0d0"/><rect x="0" y="12.6" width="14" height="1.2" fill="#d0d0d0"/></svg>
<div class="a" style="left:1720px;top:849px;width:181px;height:1px;background:#121212;"></div>
<svg style="left:1719px;top:855px" width="18" height="11"><path d="M0 4.5H4M2.5 3L4.5 4.5L2.5 6" stroke="#c8c8c8" stroke-width="1" fill="none"/><rect x="6" y="1.0" width="11" height="1.2" fill="#c8c8c8"/><rect x="6" y="3.4" width="11" height="1.2" fill="#c8c8c8"/><rect x="6" y="5.8" width="11" height="1.2" fill="#c8c8c8"/><rect x="6" y="8.2" width="8" height="1.2" fill="#c8c8c8"/></svg>
<svg style="left:1790px;top:856px" width="18" height="11"><path d="M0 1.5H4M2.5 0L4.5 1.5L2.5 3" stroke="#c8c8c8" stroke-width="1" fill="none"/><rect x="6" y="1.0" width="11" height="1.2" fill="#c8c8c8"/><rect x="6" y="3.4" width="11" height="1.2" fill="#c8c8c8"/><rect x="6" y="5.8" width="11" height="1.2" fill="#c8c8c8"/><rect x="6" y="8.2" width="8" height="1.2" fill="#c8c8c8"/></svg>
<svg style="left:1856px;top:854px" width="18" height="11"><path d="M0 1.5H4M2.5 0L4.5 1.5L2.5 3" stroke="#c8c8c8" stroke-width="1" fill="none"/><rect x="9" y="1.0" width="8" height="1.2" fill="#c8c8c8"/><rect x="6" y="3.4" width="11" height="1.2" fill="#c8c8c8"/><rect x="6" y="5.8" width="11" height="1.2" fill="#c8c8c8"/><rect x="6" y="8.2" width="11" height="1.2" fill="#c8c8c8"/></svg>
<svg style="left:1719px;top:874px" width="18" height="11"><path d="M17 4.5H13M14.5 3L12.5 4.5L14.5 6" stroke="#c8c8c8" stroke-width="1" fill="none"/><rect x="0" y="1.0" width="11" height="1.2" fill="#c8c8c8"/><rect x="0" y="3.4" width="11" height="1.2" fill="#c8c8c8"/><rect x="0" y="5.8" width="11" height="1.2" fill="#c8c8c8"/><rect x="0" y="8.2" width="8" height="1.2" fill="#c8c8c8"/></svg>
<svg style="left:1790px;top:874px" width="18" height="11"><path d="M0 9H4M2.5 7.5L4.5 9L2.5 10.5" stroke="#c8c8c8" stroke-width="1" fill="none"/><rect x="6" y="1.0" width="11" height="1.2" fill="#c8c8c8"/><rect x="6" y="3.4" width="11" height="1.2" fill="#c8c8c8"/><rect x="6" y="5.8" width="11" height="1.2" fill="#c8c8c8"/><rect x="6" y="8.2" width="8" height="1.2" fill="#c8c8c8"/></svg>
<div class="t" style="left:1741px;top:854px"><span class="o u">337</span> px</div>
<div class="t" style="left:1814px;top:854px"><span class="o u">81</span> px</div>
<div class="t" style="left:1880px;top:854px"><span class="o u">6</span> px</div>
<div class="t" style="left:1741px;top:871px"><span class="o u">0</span> px</div>
<div class="t" style="left:1814px;top:873px"><span class="o u">1</span> px</div>
<div class="a" style="left:0px;top:798px;width:1709px;height:282px;background:#262626;"></div>
<div class="a" style="left:0px;top:798px;width:1709px;height:19px;background:#282828;"></div>
<div class="a" style="left:343px;top:798px;width:1356px;height:18px;background:#1c1c1c;border:1px solid #0a0a0a"></div>
<div class="a" style="left:1px;top:798px;width:342px;height:19px;background:#262626;border-top:1px solid #333"></div>
<div class="a" style="left:5px;top:803px;width:1px;height:10px;background:repeating-linear-gradient(#707070 0 1px,transparent 1px 2px)"></div><div class="a" style="left:7px;top:803px;width:1px;height:10px;background:repeating-linear-gradient(#707070 0 1px,transparent 1px 2px)"></div>
<div class="a" style="left:13px;top:803px;width:10px;height:11px;background:#b8a47e;"></div>
<div class="t " style="left:27px;top:802px;color:#c0c0c0">Explosion croma key green screen [www.videograbber.net]</div>
<svg style="left:333px;top:805px" width="7" height="7"><path d="M1 1L6 6M6 1L1 6" stroke="#858585" stroke-width="1"/></svg>
<svg style="left:1677px;top:803px" width="14" height="9"><path d="M0 1h5L2.5 4Z" fill="#b0b0b0"/><path d="M6 1.5h8M6 3.5h8M6 5.5h8M6 7.5h8" stroke="#b0b0b0" stroke-width="1"/></svg>
<div class="a" style="left:1702px;top:802px;width:1px;height:10px;background:repeating-linear-gradient(#707070 0 1px,transparent 1px 2px)"></div><div class="a" style="left:1704px;top:802px;width:1px;height:10px;background:repeating-linear-gradient(#707070 0 1px,transparent 1px 2px)"></div>
<div class="a" style="left:0px;top:817px;width:1709px;height:2px;background:#141414;"></div>
<div class="t" style="left:12px;top:819px;font-family:'Liberation Serif',serif;font-weight:bold;font-size:18px;letter-spacing:.3px;color:#dca016;height:20px;line-height:20px">0:00:00:13</div>
<div class="t" style="left:15px;top:838px;font-size:10px;letter-spacing:0;color:#dca016">00013 (25.00 fps)</div>
<div class="a" style="left:108px;top:827px;width:333px;height:16px;background:#8e8e8e;border:1px solid #0a0a0a;box-shadow:inset 0 1px 0 #6c6c6c"></div>
<svg style="left:111px;top:829px" width="20" height="12" viewBox="0 0 20 12"><circle cx="7" cy="4.6" r="3.6" fill="none" stroke="#111" stroke-width="1.3"/><path d="M4.6 7.2L.8 11.2" stroke="#111" stroke-width="1.8"/><path d="M12.5 2.5H18L15.2 6Z" fill="#b0b0b0" stroke="#777" stroke-width=".6"/></svg>
<svg style="left:453px;top:828px" width="25" height="14" viewBox="0 0 25 14"><g fill="#b4b4b4"><rect x="0" y="0" width="4" height="3"/><rect x="0" y="4.5" width="4" height="3"/><rect x="0" y="9" width="4" height="3"/><rect x="18" y="0" width="4" height="3"/><rect x="18" y="4.5" width="4" height="3"/><rect x="18" y="9" width="4" height="3"/><rect x="9" y="4.5" width="4" height="3"/></g><path d="M4 1.5C7 1.5 7 6 9 6M4 6H9M4 10.5C7 10.5 7 6 9 6M18 1.5C15 1.5 15 6 13 6M18 6H13M18 10.5C15 10.5 15 6 13 6" fill="none" stroke="#b4b4b4" stroke-width="1"/><path d="M22.5 11.5H25L23.7 13.5Z" fill="#aaa"/></svg>
<div class="a" style="left:487px;top:823px;width:24px;height:24px;background:#131313;border:1px solid #060606"></div>
<svg style="left:490px;top:827px" width="18" height="16" viewBox="0 0 18 16"><rect x=".6" y=".6" width="12" height="11" fill="none" stroke="#d8d8d8" stroke-width="1.2"/><circle cx="6.6" cy="6" r="3" fill="none" stroke="#d8d8d8" stroke-width="1"/><path d="M2 2L11 10M11 2L2 10" stroke="#d8d8d8" stroke-width=".8"/><rect x="9" y="8" width="8" height="7" fill="#131313" stroke="#d8d8d8" stroke-width="1"/></svg>
<svg style="left:515px;top:826px" width="19" height="18" viewBox="0 0 19 18"><path d="M4 0V8M0 4H8M1.2 1.2L6.8 6.8M6.8 1.2L1.2 6.8" stroke="#b4b4b4" stroke-width="1"/><path d="M8 9L13 7L18 9V14.5L13 17L8 14.5Z" fill="#8a8a8a" stroke="#b4b4b4" stroke-width=".8"/><path d="M8 9L13 11.5L18 9M13 11.5V17" stroke="#ddd" stroke-width=".8" fill="none"/></svg>
<svg style="left:549px;top:828px" width="19" height="14" viewBox="0 0 19 14"><path d="M3 9C3 3 6 1 9.5 1S16 3 16 9Z" fill="#b4b4b4"/><rect x="0" y="9" width="19" height="5" fill="#8a8a8a"/><circle cx="9.5" cy="5.5" r="1.6" fill="#333"/></svg>
<svg style="left:575px;top:827px" width="19" height="16" viewBox="0 0 19 16"><path d="M0 5L13 1V12L0 16Z" fill="#7a7a7a"/><path d="M1 5V15M3 4.5V14.5M5 4V14M7 3.2V13.4M9 2.6V12.8M11 2V12.2" stroke="#262626" stroke-width=".8"/><path d="M12 0H19V11H12Z" fill="#b4b4b4" opacity=".8"/><path d="M13.5 1.5V9.5M15.5 1.5V9.5M17.5 1.5V9.5" stroke="#333" stroke-width=".7"/></svg>
<svg style="left:601px;top:827px" width="19" height="16" viewBox="0 0 19 16"><ellipse cx="8" cy="11" rx="7.5" ry="4.5" fill="#6a6a6a"/><ellipse cx="9.5" cy="8.5" rx="7.5" ry="4.5" fill="#8a8a8a"/><ellipse cx="11" cy="6" rx="7.5" ry="4.8" fill="#b4b4b4" transform="rotate(-20 11 6)"/></svg>
<svg style="left:634px;top:826px" width="20" height="18" viewBox="0 0 20 18"><ellipse cx="11" cy="7" rx="8.5" ry="6.5" fill="#b4b4b4"/><path d="M11 2.5C13 2.5 14 4 13.4 5.6L11 10L8.6 5.6C8 4 9 2.5 11 2.5Z" fill="#f4f4f4"/><circle cx="11" cy="5" r="1.1" fill="#555"/><circle cx="4.5" cy="13.5" r="2" fill="#b4b4b4"/><circle cx="1.8" cy="16.2" r="1.2" fill="#b4b4b4"/></svg>
<svg style="left:662px;top:826px" width="16" height="18" viewBox="0 0 16 18"><circle cx="8" cy="10.8" r="5.4" fill="#5c5c5c" stroke="#b4b4b4" stroke-width="1.8"/><path d="M5.5 1.8H10.5M8 1.8V5M1.6 3.4L4.2 6M1.2 5.2L3.4 2.4" stroke="#b4b4b4" stroke-width="1.5" fill="none"/></svg>
<svg style="left:688px;top:828px" width="20" height="15" viewBox="0 0 20 15"><path d="M0 1H19M1 3H19" stroke="#b4b4b4" stroke-width="1"/><path d="M1.5 3V11.5H18.5V3" fill="none" stroke="#b4b4b4" stroke-width="1"/><rect x="2" y="6" width="16" height="3" fill="#6a6a6a"/><path d="M2 4.5C6 4.5 8 10.5 12 10.5S16 6 18 5" fill="none" stroke="#e0e0e0" stroke-width="1.3"/><path d="M3 12V14M7 12V14M11 12V14M15 12V14M18 12V14" stroke="#b4b4b4" stroke-width="1"/></svg>
<div class="a" style="left:0px;top:853px;width:721px;height:1px;background:#141414;"></div>
<div class="a" style="left:0px;top:854px;width:721px;height:18px;background:#282828;"></div>
<div class="a" style="left:0px;top:872px;width:721px;height:1px;background:#141414;"></div>
<svg style="left:7px;top:859px" width="12" height="8" viewBox="0 0 12 8"><path d="M.5 4C2.5 1 4.5 .5 6 .5S9.5 1 11.5 4C9.5 7 7.5 7.5 6 7.5S2.5 7 .5 4Z" fill="none" stroke="#a8a8a8" stroke-width="1"/><circle cx="6" cy="4" r="1.9" fill="#a8a8a8"/></svg>
<svg style="left:21px;top:858px" width="13" height="11" viewBox="0 0 13 11"><path d="M0 3.5H2.5L6 .5V10.5L2.5 7.5H0Z" fill="#a8a8a8"/><path d="M7.8 3C9 4.2 9 6.8 7.8 8M9.6 1.2C12 3.6 12 7.4 9.6 9.8" fill="none" stroke="#a8a8a8" stroke-width="1.1"/></svg>
<div class="a" style="left:39px;top:860px;width:7px;height:7px;border-radius:50%;background:#a8a8a8"></div>
<svg style="left:54px;top:857px" width="9" height="12" viewBox="0 0 9 12"><path d="M2 5V3.2C2 1.6 3 .8 4.5 .8S7 1.6 7 3.2V5" fill="none" stroke="#a8a8a8" stroke-width="1.3"/><rect x=".5" y="5" width="8" height="6.5" fill="#a8a8a8"/><rect x="3.6" y="7" width="1.8" height="2.6" fill="#222"/></svg>
<div class="a" style="left:69px;top:856px;width:1px;height:14px;background:#161616;box-shadow:1px 0 0 #313131"></div>
<div class="a" style="left:101px;top:856px;width:1px;height:14px;background:#161616;box-shadow:1px 0 0 #313131"></div>
<div class="a" style="left:134px;top:856px;width:1px;height:14px;background:#161616;box-shadow:1px 0 0 #313131"></div>
<div class="a" style="left:372px;top:856px;width:1px;height:14px;background:#161616;box-shadow:1px 0 0 #313131"></div>
<div class="a" style="left:569px;top:856px;width:1px;height:14px;background:#161616;box-shadow:1px 0 0 #313131"></div>
<div class="a" style="left:705px;top:856px;width:1px;height:14px;background:#161616;box-shadow:1px 0 0 #313131"></div>
<svg style="left:84px;top:856px" width="14" height="14" viewBox="0 0 14 14"><path d="M6 1.5L12.5 1L12.5 7L6.5 13L.8 7.2Z" fill="#a8a8a8"/><circle cx="10" cy="3.6" r="1.2" fill="#262626"/><path d="M13 .5C11 -.5 9 2 10 3.6" stroke="#a8a8a8" stroke-width=".8" fill="none"/></svg>
<div class="t " style="left:108px;top:857px;font-size:10px;letter-spacing:-.5px;color:#a0a0a0">#</div>
<div class="t " style="left:140px;top:857px;font-size:10px;letter-spacing:-.5px;color:#a0a0a0">Nombre de origen</div>
<div class="t " style="left:378px;top:857px;font-size:10px;letter-spacing:-.5px;color:#a0a0a0">Modo</div>
<div class="t " style="left:469px;top:857px;font-size:10px;letter-spacing:-.5px;color:#a0a0a0">T</div>
<div class="t " style="left:486px;top:857px;font-size:10px;letter-spacing:-.5px;color:#a0a0a0">Mate seguim.</div>
<div class="t " style="left:575px;top:857px;font-size:10px;letter-spacing:-.5px;color:#a0a0a0">Primario</div>
<div class="a" style="left:0px;top:890px;width:721px;height:17px;background:#2e2e2e;"></div>
<div class="a" style="left:0px;top:889px;width:721px;height:1px;background:#1c1c1c;"></div>
<div class="a" style="left:0px;top:906px;width:721px;height:1px;background:#1c1c1c;"></div>
<div class="a" style="left:6px;top:875px;width:14px;height:14px;border-right:1px solid #1a1a1a;border-bottom:1px solid #1a1a1a"></div>
<div class="a" style="left:22px;top:875px;width:14px;height:14px;border-right:1px solid #1a1a1a;border-bottom:1px solid #1a1a1a"></div>
<div class="a" style="left:38px;top:875px;width:14px;height:14px;border-right:1px solid #1a1a1a;border-bottom:1px solid #1a1a1a"></div>
<div class="a" style="left:52px;top:875px;width:14px;height:14px;border-right:1px solid #1a1a1a;border-bottom:1px solid #1a1a1a"></div>
<svg style="left:21px;top:876px" width="13" height="11" viewBox="0 0 13 11"><path d="M0 3.5H2.5L6 .5V10.5L2.5 7.5H0Z" fill="#a8a8a8"/><path d="M7.8 3C9 4.2 9 6.8 7.8 8M9.6 1.2C12 3.6 12 7.4 9.6 9.8" fill="none" stroke="#a8a8a8" stroke-width="1.1"/></svg>
<svg style="left:76px;top:877px" width="7" height="9"><path d="M0 0L6.5 4.5L0 9Z" fill="#8e8e8e"/></svg>
<div class="a" style="left:88px;top:876px;width:10px;height:11px;background:#a9d4cc;"></div>
<div class="t " style="left:108px;top:875px;font-weight:bold;color:#c0c0c0">1</div>
<svg style="left:139px;top:875px" width="10" height="13" viewBox="0 0 10 13"><path d="M.5 .5H7L9.5 3V12.5H.5Z" fill="#e8e8e8" stroke="#888" stroke-width=".8"/><rect x="2.5" y="5" width="5" height="4.5" fill="#3a78c8"/><rect x="3.6" y="6" width="2.8" height="2.4" fill="#cfe0f4"/></svg>
<svg style="left:153px;top:876px" width="13" height="12" viewBox="0 0 13 12"><rect x=".6" y=".6" width="11.8" height="10.8" fill="#262626" stroke="#c8c8c8" stroke-width="1.2"/><ellipse cx="6.5" cy="6" rx="3.6" ry="3.2" fill="#e0e0e0"/></svg>
<div class="t " style="left:172px;top:875px;font-weight:bold;color:#c0c0c0;letter-spacing:.45px">Explosi...w.videograbber.net].mp4</div>
<div class="dd" style="left:376px;top:875px;width:83px;"><span>Normal</span><b></b><i></i></div>
<svg style="left:576px;top:876px" width="11" height="11" viewBox="0 0 11 11"><path d="M5.5 5.5C5.5 4 7.5 4 7.5 5.8C7.5 8 3.5 8.2 3.3 5.4C3.2 2.2 8.8 1.6 9.6 5.4C10 8.6 7 10.2 4.5 9.8" fill="none" stroke="#b4b4b4" stroke-width="1.2"/></svg>
<div class="dd" style="left:593px;top:875px;width:107px;"><span>Ninguno</span><b></b><i></i></div>
<div class="a" style="left:6px;top:892px;width:14px;height:14px;border-right:1px solid #1a1a1a;border-bottom:1px solid #1a1a1a"></div>
<div class="a" style="left:22px;top:892px;width:14px;height:14px;border-right:1px solid #1a1a1a;border-bottom:1px solid #1a1a1a"></div>
<div class="a" style="left:38px;top:892px;width:14px;height:14px;border-right:1px solid #1a1a1a;border-bottom:1px solid #1a1a1a"></div>
<div class="a" style="left:52px;top:892px;width:14px;height:14px;border-right:1px solid #1a1a1a;border-bottom:1px solid #1a1a1a"></div>
<svg style="left:7px;top:895px" width="12" height="8" viewBox="0 0 12 8"><path d="M.5 4C2.5 1 4.5 .5 6 .5S9.5 1 11.5 4C9.5 7 7.5 7.5 6 7.5S2.5 7 .5 4Z" fill="none" stroke="#a8a8a8" stroke-width="1"/><circle cx="6" cy="4" r="1.9" fill="#a8a8a8"/></svg>
<svg style="left:21px;top:893px" width="13" height="11" viewBox="0 0 13 11"><path d="M0 3.5H2.5L6 .5V10.5L2.5 7.5H0Z" fill="#a8a8a8"/><path d="M7.8 3C9 4.2 9 6.8 7.8 8M9.6 1.2C12 3.6 12 7.4 9.6 9.8" fill="none" stroke="#a8a8a8" stroke-width="1.1"/></svg>
<svg style="left:76px;top:894px" width="7" height="9"><path d="M0 0L6.5 4.5L0 9Z" fill="#8e8e8e"/></svg>
<div class="a" style="left:88px;top:893px;width:10px;height:11px;background:#a9d4cc;"></div>
<div class="t " style="left:108px;top:892px;font-weight:bold;color:#c0c0c0">2</div>
<svg style="left:139px;top:892px" width="10" height="13" viewBox="0 0 10 13"><path d="M.5 .5H7L9.5 3V12.5H.5Z" fill="#e8e8e8" stroke="#888" stroke-width=".8"/><rect x="2.5" y="5" width="5" height="4.5" fill="#3a78c8"/><rect x="3.6" y="6" width="2.8" height="2.4" fill="#cfe0f4"/></svg>
<svg style="left:153px;top:893px" width="13" height="12" viewBox="0 0 13 12"><rect x=".6" y=".6" width="11.8" height="10.8" fill="#d0d0d0" stroke="#c8c8c8" stroke-width="1.2" stroke-dasharray="2 1.4"/><ellipse cx="6.5" cy="6" rx="3.8" ry="3.4" fill="#101010"/></svg>
<div class="a" style="left:169px;top:891px;width:203px;height:16px;border:2px solid #a6a6a6;background:#2a2a2a"></div>
<div class="t " style="left:172px;top:892px;font-weight:bold;color:#c0c0c0;letter-spacing:.45px">Explosi...w.videograbber.net].mp4</div>
<div class="dd" style="left:376px;top:892px;width:83px;"><span>Normal</span><b></b><i></i></div>
<div class="a" style="left:465px;top:892px;width:14px;height:14px;background:#2c2c2c;border:1px solid #141414"></div>
<div class="dd" style="left:484px;top:892px;width:81px"><span style="left:7px">Luminancia</span><i></i></div>
<svg style="left:576px;top:893px" width="11" height="11" viewBox="0 0 11 11"><path d="M5.5 5.5C5.5 4 7.5 4 7.5 5.8C7.5 8 3.5 8.2 3.3 5.4C3.2 2.2 8.8 1.6 9.6 5.4C10 8.6 7 10.2 4.5 9.8" fill="none" stroke="#b4b4b4" stroke-width="1.2"/></svg>
<div class="dd" style="left:593px;top:892px;width:107px;"><span>Ninguno</span><b></b><i></i></div>
<div class="a" style="left:720px;top:819px;width:2px;height:261px;background:#0a0a0a;"></div>
<div class="a" style="left:722px;top:819px;width:969px;height:5px;background:#262626;"></div>
<div class="a" style="left:722px;top:824px;width:969px;height:8px;background:#6e6e6e;border-top:1px solid #141414;border-bottom:1px solid #141414"></div>
<div class="a" style="left:722px;top:825px;width:6px;height:6px;background:#e0a818;border-radius:2px 0 0 2px"></div>
<div class="a" style="left:1685px;top:825px;width:6px;height:6px;background:#e0a818;border-radius:0 2px 2px 0"></div>
<div class="a" style="left:828px;top:825px;width:1px;height:6px;background:#e03030;"></div>
<div class="a" style="left:722px;top:832px;width:969px;height:21px;background:#262626;"></div>
<div class="a" style="left:722px;top:832px;width:40px;height:20px;overflow:hidden"><div class="t" style="left:-2px;top:3px;font-size:10px;letter-spacing:-.55px;color:#b0b0b0">0:00s</div></div>
<div class="t " style="left:912px;top:835px;font-size:10px;letter-spacing:-.55px;color:#b0b0b0">01s</div>
<div class="t " style="left:1103px;top:835px;font-size:10px;letter-spacing:-.55px;color:#b0b0b0">02s</div>
<div class="t " style="left:1294px;top:835px;font-size:10px;letter-spacing:-.55px;color:#b0b0b0">03s</div>
<div class="t " style="left:1485px;top:835px;font-size:10px;letter-spacing:-.55px;color:#b0b0b0">04s</div>
<div class="t " style="left:1676px;top:835px;font-size:10px;letter-spacing:-.55px;color:#b0b0b0">05s</div>
<div class="a" style="left:729px;top:847px;width:1px;height:6px;background:#9a9a9a;"></div>
<div class="a" style="left:920px;top:847px;width:1px;height:6px;background:#9a9a9a;"></div>
<div class="a" style="left:1111px;top:847px;width:1px;height:6px;background:#9a9a9a;"></div>
<div class="a" style="left:1302px;top:847px;width:1px;height:6px;background:#9a9a9a;"></div>
<div class="a" style="left:1493px;top:847px;width:1px;height:6px;background:#9a9a9a;"></div>
<div class="a" style="left:1684px;top:847px;width:1px;height:6px;background:#9a9a9a;"></div>
<div class="a" style="left:722px;top:853px;width:969px;height:16px;background:#636363;border-top:1px solid #141414"></div>
<div class="a" style="left:722px;top:854px;width:6px;height:15px;background:linear-gradient(90deg,#d8a010 0 1px,#7a5600 1px 2px,#e0aa18 2px 3px,#7a5600 3px 4px,#d8a010 4px);border:1px solid #6a4a00;border-radius:1px"></div>
<div class="a" style="left:1685px;top:854px;width:6px;height:15px;background:linear-gradient(90deg,#d8a010 0 1px,#7a5600 1px 2px,#e0aa18 2px 3px,#7a5600 3px 4px,#d8a010 4px);border:1px solid #6a4a00;border-radius:1px"></div>
<div class="a" style="left:729px;top:869px;width:955px;height:3px;background:#20c224;"></div>
<div class="a" style="left:722px;top:872px;width:969px;height:189px;background:#333333;"></div>
<div class="a" style="left:722px;top:872px;width:7px;height:189px;background:#2a2a2a;"></div>
<div class="a" style="left:729px;top:874px;width:955px;height:15px;background:#6e807e;border-radius:4px 4px 0 0/5px 5px 0 0;border-bottom:1px solid #222"></div>
<div class="a" style="left:729px;top:890px;width:955px;height:16px;background:linear-gradient(#a9c8c4,#93b4b0);border-radius:4px 4px 0 0/5px 5px 0 0;border-left:1px solid #e8f4f2"></div>
<svg style="left:729px;top:874px" width="6" height="6"><path d="M0 0H6C3 0 0 3 0 6Z" fill="#1a1a1a"/></svg>
<svg style="left:1678px;top:874px" width="6" height="6"><path d="M6 0H0C3 0 6 3 6 6Z" fill="#1a1a1a"/></svg>
<svg style="left:729px;top:890px" width="6" height="6"><path d="M0 0H6C3 0 0 3 0 6Z" fill="#1a1a1a"/></svg>
<svg style="left:1678px;top:890px" width="6" height="6"><path d="M6 0H0C3 0 6 3 6 6Z" fill="#1a1a1a"/></svg>
<div class="a" style="left:828px;top:850px;width:1px;height:211px;background:#e02020;"></div>
<svg style="left:823px;top:837px" width="11" height="14" viewBox="0 0 11 14"><path d="M1 2C1 .5 10 .5 10 2V7L5.5 13.5L1 7Z" fill="#f0b818" stroke="#8a6400" stroke-width=".8"/><path d="M3.5 3V6M5.5 3V9M7.5 3V6" stroke="#5a4000" stroke-width=".9"/></svg>
<div class="a" style="left:1691px;top:819px;width:18px;height:261px;background:#262626;border-left:1px solid #141414"></div>
<svg style="left:1693px;top:855px" width="12" height="14"><path d="M.5 .5H11.5V8L6 13.5L.5 8Z" fill="#8a8a8a" stroke="#bbb" stroke-width=".8"/></svg>
<svg style="left:1692px;top:875px" width="15" height="14" viewBox="0 0 15 14"><circle cx="6" cy="6" r="5" fill="none" stroke="#b4b4b4" stroke-width="1.2"/><rect x="8" y="5" width="6" height="6" fill="#262626" stroke="#b4b4b4"/><path d="M2 13L5 8L8 13Z" fill="#b4b4b4"/></svg>
<div class="a" style="left:1692px;top:890px;width:16px;height:158px;background:#222;border:1px solid #161616"></div>
<svg style="left:1695px;top:895px" width="10" height="7"><path d="M0 7H10L5 0Z" fill="#4a4a4a"/></svg>
<svg style="left:1695px;top:1049px" width="10" height="7"><path d="M0 0H10L5 7Z" fill="#5a5a5a"/></svg>
<div class="a" style="left:0px;top:1061px;width:1709px;height:1px;background:#121212;"></div>
<div class="a" style="left:0px;top:1062px;width:1709px;height:18px;background:#222;"></div>
<div class="a" style="left:720px;top:1061px;width:2px;height:19px;background:#0a0a0a;"></div>
<svg style="left:7px;top:1064px" width="14" height="13" viewBox="0 0 14 13"><rect x=".6" y=".6" width="9" height="8" fill="none" stroke="#b4b4b4"/><rect x="3.6" y="3.6" width="9.6" height="8.6" fill="#222" stroke="#b4b4b4"/><path d="M6 7.5L8 10L11.5 5.5" fill="none" stroke="#b4b4b4" stroke-width="1.2"/></svg>
<svg style="left:25px;top:1063px" width="14" height="14" viewBox="0 0 14 14"><rect x=".6" y=".6" width="12.8" height="12.8" fill="none" stroke="#b4b4b4"/><circle cx="6" cy="6" r="3.5" fill="none" stroke="#b4b4b4" stroke-width="1.2"/><rect x="7" y="7" width="4.5" height="4.5" fill="#b4b4b4"/></svg>
<div class="t" style="left:44px;top:1062px;font-weight:bold;font-size:12px;letter-spacing:-.5px;color:#c8c8c8">{}</div>
<div class="a" style="left:375px;top:1064px;width:193px;height:13px;background:#2b2b2b;border:1px solid #0c0c0c"></div>
<div class="t" style="left:375px;top:1064px;width:193px;text-align:center;font-size:10px;letter-spacing:0;color:#b0b0b0">Conmutar definidores / modos</div>
<svg style="left:728px;top:1067px" width="10" height="6"><path d="M0 6L3 1L5 4L7 1L10 6Z" fill="#b4b4b4"/></svg>
<div class="a" style="left:750px;top:1069px;width:46px;height:3px;background:#111;border-bottom:1px solid #333"></div>
<svg style="left:747px;top:1065px" width="8" height="9"><path d="M0 9V3.5L4 0L8 3.5V9Z" fill="#3a3a3a" stroke="#8a8a8a" stroke-width=".8"/></svg>
<svg style="left:807px;top:1064px" width="18" height="10"><path d="M0 10L5 1L9 6L13 0L18 10Z" fill="#b4b4b4"/></svg>
<div class="a" style="left:830px;top:1062px;width:861px;height:18px;background:#202020;"></div>
<svg style="left:835px;top:1065px" width="7" height="10"><path d="M7 0V10L0 5Z" fill="#5a5a5a"/></svg>
<svg style="left:1679px;top:1065px" width="7" height="10"><path d="M0 0V10L7 5Z" fill="#5a5a5a"/></svg>
</body></html>
